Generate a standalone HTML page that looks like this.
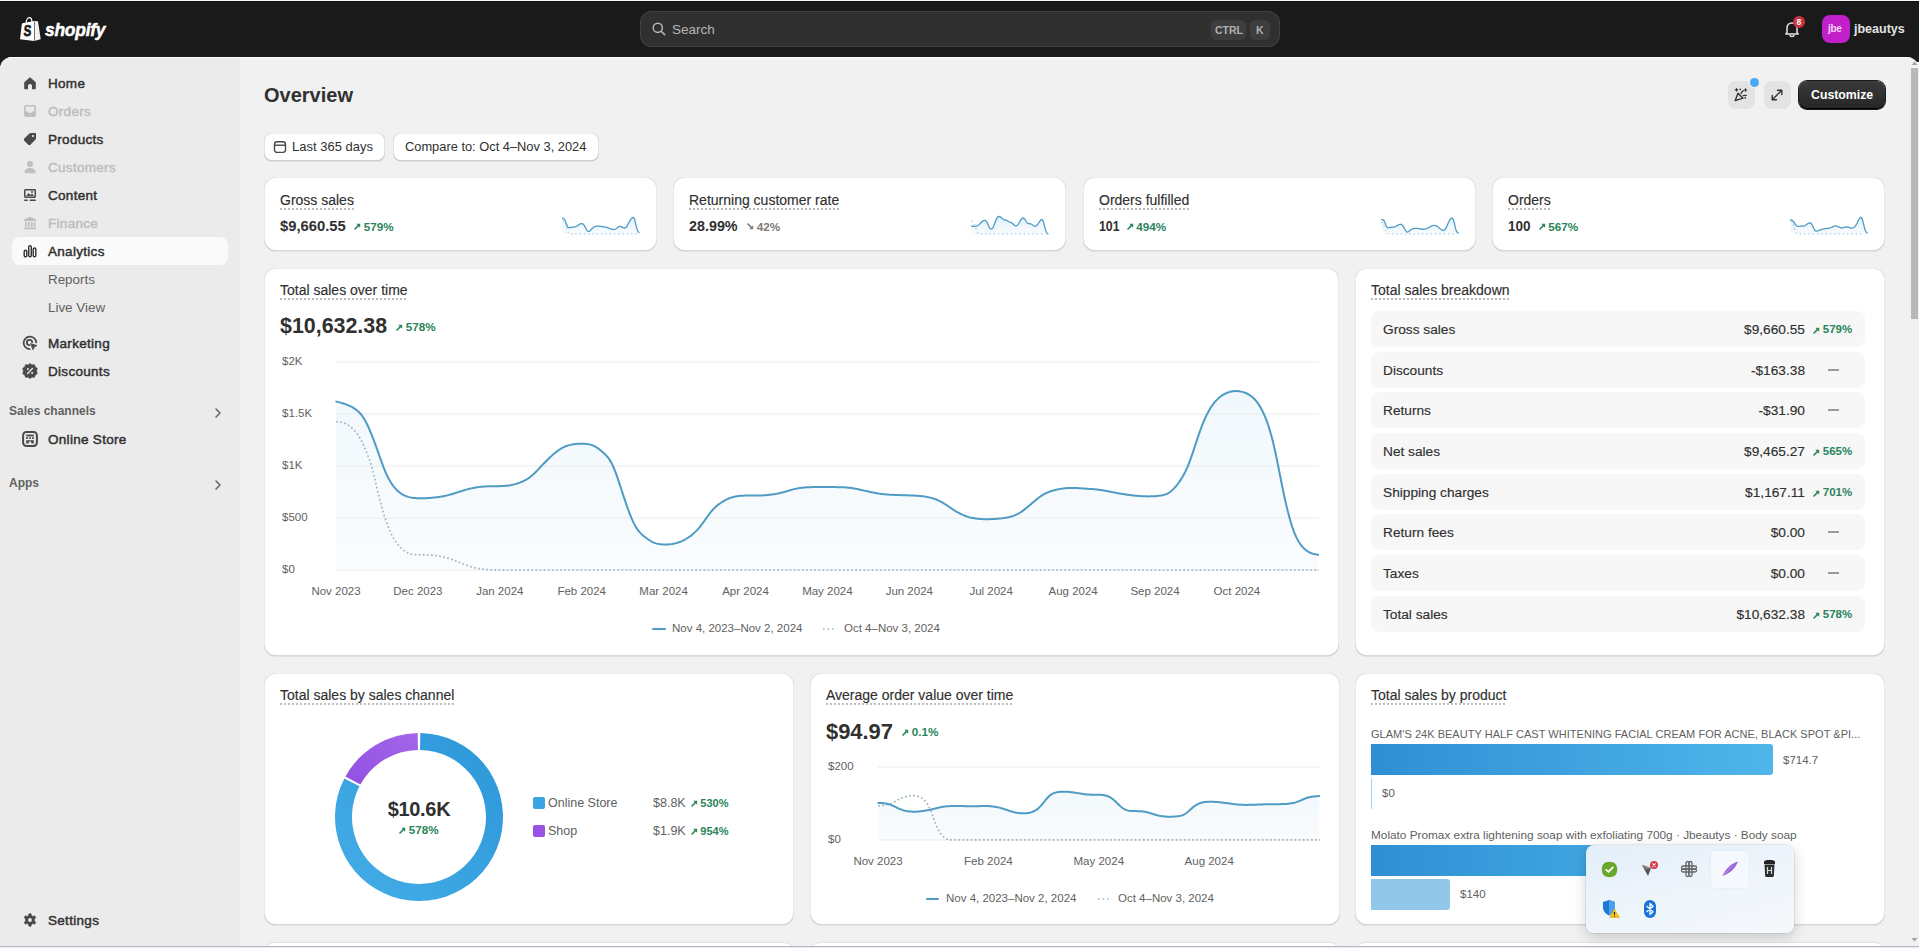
<!DOCTYPE html><html><head><meta charset="utf-8"><style>
*{box-sizing:border-box;margin:0;padding:0}
html,body{width:1919px;height:948px;overflow:hidden;background:#1a1a1a;font-family:"Liberation Sans", sans-serif;color:#303030}
.a{position:absolute}
.t{position:absolute;white-space:nowrap;line-height:1}
.card{position:absolute;background:#fff;border-radius:12px;box-shadow:0 1px 0 0 rgba(26,26,26,.07), inset 1px 0 0 rgba(0,0,0,.09), inset -1px 0 0 rgba(0,0,0,.09), inset 0 -1px 0 rgba(0,0,0,.15), inset 0 1px 0 rgba(0,0,0,.07)}
.ttl{position:absolute;white-space:nowrap;font-size:14px;line-height:16px;color:#303030;background-image:linear-gradient(to right,#bdbdbd 50%,rgba(255,255,255,0) 0%);background-position:0 100%;background-size:4px 2px;background-repeat:repeat-x;padding-bottom:2px;-webkit-text-stroke:0.15px #303030}
.nav{position:absolute;left:48px;font-size:13.5px;font-weight:400;color:#303030;-webkit-text-stroke:0.45px #303030;letter-spacing:0.3px;white-space:nowrap;line-height:1}
.nav.dis{color:#bdbdbd;-webkit-text-stroke:0.45px #bdbdbd}
.sub{position:absolute;left:48px;font-size:13.4px;color:#616161;white-space:nowrap;line-height:1}
.pct{font-size:12px;font-weight:700;color:#29845a}
</style></head><body><div class="a" style="left:0;top:0;width:1919px;height:1px;background:#fbf8f2"></div>
<div class="a" style="left:0;top:1px;width:1919px;height:1px;background:#100d0b"></div>
<svg class="a" style="left:0;top:0" width="120" height="56" viewBox="0 0 120 56">
<path d="M20,39.2 L21.9,23.9 Q22.3,23.2 23.4,23 L34.3,21.1 L34.3,41 Z" fill="#fff"/>
<path d="M34.3,21.1 L37.6,21.3 Q38,21.5 38.1,22 L40.7,39.2 L34.3,41 Z" fill="#f2f2f2"/>
<path d="M34.5,22 V40.8" stroke="#3a3a3a" stroke-width="0.6"/>
<path d="M26.2,23 C26.2,19.6 27.8,17.6 29.4,17.7 C31,17.8 31.9,19.6 31.9,21.9" stroke="#fff" stroke-width="1.2" fill="none"/>
<text x="0" y="0" transform="translate(23.3,36.2) scale(0.74,1) skewX(-6)" font-family="Liberation Sans" font-weight="700" font-size="15.6" fill="#1a1a1a" stroke="#1a1a1a" stroke-width="0.7">S</text>
</svg>
<div class="t" style="left:44.5px;top:19.6px;font-size:19px;font-weight:700;font-style:italic;color:#fff;-webkit-text-stroke:0.5px #fff;letter-spacing:-0.3px;transform:scaleX(0.92);transform-origin:0 0">shopify</div>
<div class="a" style="left:640px;top:11px;width:640px;height:36px;border-radius:12px;background:#303030;box-shadow:inset 0 0 0 1px #414141"></div>
<svg class="a" style="left:652px;top:22px" width="14" height="14" viewBox="0 0 14 14"><circle cx="5.8" cy="5.8" r="4.6" stroke="#b5b5b5" stroke-width="1.5" fill="none"/><path d="M9.2 9.2 L12.6 12.6" stroke="#b5b5b5" stroke-width="1.6" stroke-linecap="round"/></svg>
<div class="t" style="left:672px;top:23px;font-size:13.5px;color:#b5b5b5">Search</div>
<div class="a" style="left:1211px;top:20px;width:35px;height:20px;border-radius:5px;background:#3d3d3d"></div>
<div class="t" style="left:1215px;top:25px;font-size:10.5px;font-weight:700;color:#b0b0b0">CTRL</div>
<div class="a" style="left:1250px;top:20px;width:20px;height:20px;border-radius:5px;background:#3d3d3d"></div>
<div class="t" style="left:1256px;top:25px;font-size:10.5px;font-weight:700;color:#b0b0b0">K</div>
<svg class="a" style="left:1783px;top:20px" width="18" height="18" viewBox="0 0 18 18">
<path d="M4 12.5 V8 C4 5 6.2 3 9 3 C11.8 3 14 5 14 8 V12.5 L15.2 14 H2.8 Z" stroke="#e3e3e3" stroke-width="1.5" fill="none" stroke-linejoin="round"/>
<path d="M7 15.5 C7.3 16.7 10.7 16.7 11 15.5" stroke="#e3e3e3" stroke-width="1.5" fill="none" stroke-linecap="round"/>
</svg>
<div class="a" style="left:1793px;top:16px;width:12px;height:12px;border-radius:6px;background:#c9313d"></div>
<div class="t" style="left:1796.5px;top:18px;font-size:8.5px;font-weight:700;color:#fff">8</div>
<div class="a" style="left:1822px;top:15px;width:28px;height:28px;border-radius:8px;background:#c11fc9"></div>
<div class="t" style="left:1828px;top:24px;font-size:10px;font-weight:700;color:#f4d7f5;letter-spacing:-0.3px">jbe</div>
<div class="t" style="left:1854px;top:23px;font-size:12.5px;font-weight:700;color:#e3e3e3">jbeautys</div>
<div class="a" style="left:0;top:57px;width:1919px;height:891px;background:#f1f1f1;border-radius:12px 12px 0 0;overflow:hidden"><div class="a" style="left:0;top:0;width:240px;height:891px;background:#ebebeb"></div><div class="a" style="left:0;top:0;width:1919px;height:1px;background:rgba(255,255,255,.9)"></div></div>
<div class="a" style="left:1910px;top:62px;width:9px;height:880px;background:#f1f1f1"></div>
<svg class="a" style="left:1910px;top:60px" width="9" height="6" viewBox="0 0 9 6"><path d="M1.5 5 L4.5 1.5 L7.5 5 Z" fill="#a3a3a3"/></svg>
<div class="a" style="left:1911px;top:68px;width:7px;height:251px;background:#b8b8b8"></div>
<svg class="a" style="left:1910px;top:936.5px" width="9" height="6" viewBox="0 0 9 6"><path d="M1.5 1 L4.5 4.5 L7.5 1 Z" fill="#a3a3a3"/></svg>
<svg class="a" style="left:23px;top:76px" width="14" height="14" viewBox="0 0 14 14"><path d="M1.2 6.2 L7 1.2 L12.8 6.2 V12.2 C12.8 12.8 12.4 13.2 11.8 13.2 H9 V9.8 C9 8.7 8.1 7.9 7 7.9 C5.9 7.9 5 8.7 5 9.8 V13.2 H2.2 C1.6 13.2 1.2 12.8 1.2 12.2 Z" fill="#4a4a4a"/></svg>
<div class="nav" style="top:76.5px">Home</div>
<svg class="a" style="left:23px;top:104px" width="14" height="14" viewBox="0 0 14 14"><path d="M3 1 H11 C12.1 1 13 1.9 13 3 V11 C13 12.1 12.1 13 11 13 H3 C1.9 13 1 12.1 1 11 V3 C1 1.9 1.9 1 3 1 Z M2.6 7.6 H5 L6 9 H8 L9 7.6 H11.4 V3.2 C11.4 2.9 11.1 2.6 10.8 2.6 H3.2 C2.9 2.6 2.6 2.9 2.6 3.2 Z" fill="#bfbfbf" fill-rule="evenodd"/></svg>
<div class="nav dis" style="top:104.5px">Orders</div>
<svg class="a" style="left:23px;top:132px" width="14" height="14" viewBox="0 0 14 14"><path d="M7.6 1 H12 C12.6 1 13 1.4 13 2 V6.4 C13 6.9 12.8 7.3 12.5 7.6 L7.4 12.7 C6.8 13.3 5.9 13.3 5.3 12.7 L1.3 8.7 C0.7 8.1 0.7 7.2 1.3 6.6 L6.4 1.5 C6.7 1.2 7.1 1 7.6 1 Z" fill="#4a4a4a"/><circle cx="10" cy="4" r="1.1" fill="#ebebeb"/></svg>
<div class="nav" style="top:132.5px">Products</div>
<svg class="a" style="left:23px;top:160px" width="14" height="14" viewBox="0 0 14 14"><circle cx="7" cy="4" r="3" fill="#bfbfbf"/><path d="M1.5 12.5 C1.5 9.5 4 8 7 8 C10 8 12.5 9.5 12.5 12.5 C12.5 13 12.1 13.3 11.6 13.3 H2.4 C1.9 13.3 1.5 13 1.5 12.5 Z" fill="#bfbfbf"/></svg>
<div class="nav dis" style="top:160.5px">Customers</div>
<svg class="a" style="left:23px;top:188px" width="14" height="14" viewBox="0 0 14 14"><path d="M2.5 1 H11.5 C12.3 1 13 1.7 13 2.5 V8.5 C13 9.3 12.3 10 11.5 10 H2.5 C1.7 10 1 9.3 1 8.5 V2.5 C1 1.7 1.7 1 2.5 1 Z M2.5 2.5 V8.5 H11.5 V2.5 Z" fill="#4a4a4a" fill-rule="evenodd"/><path d="M3 8 L5.5 5 L7.5 7 L9 5.5 L11 8 Z" fill="#4a4a4a"/><circle cx="9" cy="4" r="1" fill="#4a4a4a"/><rect x="1" y="11.5" width="4" height="1.6" rx="0.8" fill="#4a4a4a"/><rect x="6.5" y="11.5" width="6.5" height="1.6" rx="0.8" fill="#4a4a4a"/></svg>
<div class="nav" style="top:188.5px">Content</div>
<svg class="a" style="left:23px;top:216px" width="14" height="14" viewBox="0 0 14 14"><path d="M7 0.8 L13 3.6 V5 H1 V3.6 Z" fill="#bfbfbf"/><rect x="2" y="5.8" width="1.8" height="5" fill="#bfbfbf"/><rect x="5" y="5.8" width="1.8" height="5" fill="#bfbfbf"/><rect x="8" y="5.8" width="1.8" height="5" fill="#bfbfbf"/><rect x="11" y="5.8" width="1.4" height="5" fill="#bfbfbf"/><rect x="1" y="11.4" width="12" height="1.8" rx="0.5" fill="#bfbfbf"/></svg>
<div class="nav dis" style="top:216.5px">Finance</div>
<div class="a" style="left:12px;top:237px;width:216px;height:28px;border-radius:8px;background:#fafafa"></div>
<svg class="a" style="left:23px;top:244px" width="14" height="14" viewBox="0 0 14 14"><rect x="1.2" y="6.2" width="2.6" height="6.6" rx="1.3" stroke="#303030" stroke-width="1.4" fill="none"/><rect x="5.7" y="1.6" width="2.6" height="11.2" rx="1.3" stroke="#303030" stroke-width="1.4" fill="none"/><rect x="10.2" y="4" width="2.6" height="8.8" rx="1.3" stroke="#303030" stroke-width="1.4" fill="none"/></svg>
<div class="nav" style="top:244.5px">Analytics</div>
<div class="sub" style="top:273px">Reports</div>
<div class="sub" style="top:301px">Live View</div>
<svg class="a" style="left:22px;top:335px" width="16" height="16" viewBox="0 0 16 16"><path d="M14.2 7.4 A6.3 6.3 0 1 0 7.6 14.2" stroke="#4a4a4a" stroke-width="1.8" fill="none" stroke-linecap="round"/><path d="M10.2 7.2 A2.7 2.7 0 1 0 7.4 10.2" stroke="#4a4a4a" stroke-width="1.8" fill="none" stroke-linecap="round"/><path d="M8.6 8.6 L15 10.6 L12.2 12 L11 14.8 Z" fill="#4a4a4a" stroke="#4a4a4a" stroke-width="0.8" stroke-linejoin="round"/></svg>
<div class="nav" style="top:336.5px">Marketing</div>
<svg class="a" style="left:22px;top:363px" width="16" height="16" viewBox="0 0 16 16"><path d="M8 0.4 L10 1.9 L12.4 1.6 L13.3 3.9 L15.3 5.3 L14.6 8 L15.3 10.7 L13.3 12.1 L12.4 14.4 L10 14.1 L8 15.6 L6 14.1 L3.6 14.4 L2.7 12.1 L0.7 10.7 L1.4 8 L0.7 5.3 L2.7 3.9 L3.6 1.6 L6 1.9 Z" fill="#4a4a4a" stroke="#4a4a4a" stroke-width="0.6" stroke-linejoin="round"/><path d="M5.6 10.4 L10.4 5.6" stroke="#ebebeb" stroke-width="1.4" stroke-linecap="round"/><circle cx="5.9" cy="5.9" r="1" fill="#ebebeb"/><circle cx="10.1" cy="10.1" r="1" fill="#ebebeb"/></svg>
<div class="nav" style="top:364.5px">Discounts</div>
<div class="t" style="left:9px;top:404.5px;font-size:12px;font-weight:700;color:#616161">Sales channels</div>
<svg class="a" style="left:214px;top:407px" width="8" height="12" viewBox="0 0 8 12"><path d="M2 2 L6 6 L2 10" stroke="#616161" stroke-width="1.5" fill="none" stroke-linecap="round" stroke-linejoin="round"/></svg>
<svg class="a" style="left:22px;top:431px" width="16" height="16" viewBox="0 0 16 16"><rect x="1.1" y="1.1" width="13.8" height="13.8" rx="3.3" stroke="#4a4a4a" stroke-width="2" fill="none"/><rect x="4.2" y="3.6" width="7.6" height="1.8" fill="#4a4a4a"/><circle cx="5" cy="7" r="1.05" fill="#4a4a4a"/><circle cx="8" cy="7" r="1.05" fill="#4a4a4a"/><circle cx="11" cy="7" r="1.05" fill="#4a4a4a"/><path d="M4.2 9.2 H11.8 V12.4 H9.2 V10.6 H6.8 V12.4 H4.2 Z" fill="#4a4a4a"/></svg>
<div class="nav" style="top:432.5px">Online Store</div>
<div class="t" style="left:9px;top:476.5px;font-size:12px;font-weight:700;color:#616161">Apps</div>
<svg class="a" style="left:214px;top:479px" width="8" height="12" viewBox="0 0 8 12"><path d="M2 2 L6 6 L2 10" stroke="#616161" stroke-width="1.5" fill="none" stroke-linecap="round" stroke-linejoin="round"/></svg>
<svg class="a" style="left:23px;top:913px" width="14" height="14" viewBox="0 0 14 14"><path d="M5.9 0.8 H8.1 L8.5 2.6 L9.9 3.4 L11.7 2.8 L12.8 4.7 L11.4 6 V8 L12.8 9.3 L11.7 11.2 L9.9 10.6 L8.5 11.4 L8.1 13.2 H5.9 L5.5 11.4 L4.1 10.6 L2.3 11.2 L1.2 9.3 L2.6 8 V6 L1.2 4.7 L2.3 2.8 L4.1 3.4 L5.5 2.6 Z" fill="#4a4a4a" stroke="#4a4a4a" stroke-width="0.6" stroke-linejoin="round"/><circle cx="7" cy="7" r="1.9" fill="#ebebeb"/></svg>
<div class="nav" style="top:913.5px">Settings</div>
<div class="t" style="left:264px;top:85px;font-size:20px;font-weight:700;color:#303030">Overview</div>
<div class="a" style="left:1728px;top:81px;width:27px;height:28px;border-radius:8px;background:#e3e3e3"></div>
<svg class="a" style="left:1733px;top:87px" width="17" height="16" viewBox="0 0 17 16">
<path d="M2.2 13.6 L5 6.2 L10 11.2 Z" stroke="#303030" stroke-width="1.4" fill="none" stroke-linejoin="round"/>
<path d="M8 6.5 C8.5 5 9.5 4.5 10.3 3.6" stroke="#303030" stroke-width="1.3" fill="none" stroke-linecap="round"/>
<path d="M10.2 8.7 L13.2 8.3" stroke="#303030" stroke-width="1.3" stroke-linecap="round"/>
<path d="M3.5 1.5 L3.5 4 M2.2 2.8 L4.8 2.8" stroke="#303030" stroke-width="1.2" stroke-linecap="round"/>
<path d="M12.5 1.8 L12.5 4.2 M11.3 3 L13.7 3" stroke="#303030" stroke-width="1.2" stroke-linecap="round"/>
<circle cx="7.2" cy="2.4" r="0.8" fill="#303030"/><circle cx="12.2" cy="10.8" r="0.9" fill="#303030"/>
</svg>
<div class="a" style="left:1750px;top:78px;width:9px;height:9px;border-radius:5px;background:#4aa8f0;box-shadow:0 0 0 1.5px #f1f1f1"></div>
<div class="a" style="left:1764px;top:81px;width:27px;height:28px;border-radius:8px;background:#e3e3e3"></div>
<svg class="a" style="left:1769px;top:87px" width="16" height="16" viewBox="0 0 16 16">
<path d="M3.5 12.5 L12.5 3.5" stroke="#303030" stroke-width="1.4" stroke-linecap="round"/>
<path d="M8.5 3.2 H12.8 V7.5" stroke="#303030" stroke-width="1.4" fill="none" stroke-linecap="round" stroke-linejoin="round"/>
<path d="M3.2 8.5 V12.8 H7.5" stroke="#303030" stroke-width="1.4" fill="none" stroke-linecap="round" stroke-linejoin="round"/>
</svg>
<div class="a" style="left:1799px;top:81px;width:86px;height:28px;border-radius:8px;background:linear-gradient(#3a3a3a,#262626);box-shadow:inset 0 -1px 0 #000, 0 0 0 1px #1a1a1a"></div>
<div class="t" style="left:1811px;top:88.5px;font-size:12.3px;font-weight:700;color:#fff">Customize</div>
<div class="a" style="left:264px;top:133px;width:121px;height:28px;border-radius:8px;background:#fff;box-shadow:0 1px 0 0 rgba(26,26,26,.07), inset 1px 0 0 rgba(0,0,0,.1), inset -1px 0 0 rgba(0,0,0,.1), inset 0 -1px 0 rgba(0,0,0,.18), inset 0 1px 0 rgba(0,0,0,.06)"></div>
<svg class="a" style="left:273px;top:140px" width="14" height="14" viewBox="0 0 14 14"><rect x="1.5" y="1.8" width="11" height="10.6" rx="2.6" stroke="#4a4a4a" stroke-width="1.4" fill="none"/><path d="M1.8 5.2 H12.2" stroke="#4a4a4a" stroke-width="1.4"/></svg>
<div class="t" style="left:292px;top:139.5px;font-size:13px;color:#303030">Last 365 days</div>
<div class="a" style="left:393px;top:133px;width:206px;height:28px;border-radius:8px;background:#fff;box-shadow:0 1px 0 0 rgba(26,26,26,.07), inset 1px 0 0 rgba(0,0,0,.1), inset -1px 0 0 rgba(0,0,0,.1), inset 0 -1px 0 rgba(0,0,0,.18), inset 0 1px 0 rgba(0,0,0,.06)"></div>
<div class="t" style="left:405px;top:140.5px;font-size:12.85px;color:#303030">Compare to: Oct 4–Nov 3, 2024</div>
<div class="card" style="left:264px;top:177px;width:393px;height:74px"></div>
<div class="ttl" style="left:280px;top:192px">Gross sales</div>
<div class="t" style="left:280px;top:218px;font-size:15px;font-weight:700;color:#303030;transform:scaleX(0.985);transform-origin:0 0">$9,660.55</div>
<svg class="a" style="left:354px;top:223.0px" width="7" height="7" viewBox="0 0 7 7"><path d="M1 6 L4.6 2.4" stroke="#29845a" stroke-width="1.6" stroke-linecap="round"/><path d="M2.3 0.8 H6.2 V4.7 Z" fill="#29845a"/></svg><div class="t" style="left:363.8px;top:220.81px;font-size:11.7px;font-weight:700;color:#29845a">579%</div>
<div class="card" style="left:673px;top:177px;width:393px;height:74px"></div>
<div class="ttl" style="left:689px;top:192px">Returning customer rate</div>
<div class="t" style="left:689px;top:218px;font-size:15px;font-weight:700;color:#303030;transform:scaleX(0.955);transform-origin:0 0">28.99%</div>
<svg class="a" style="left:747px;top:223.0px" width="7" height="7" viewBox="0 0 7 7"><path d="M1 1 L4.6 4.6" stroke="#7a7a7a" stroke-width="1.6" stroke-linecap="round"/><path d="M2.3 6.2 H6.2 V2.3 Z" fill="#7a7a7a"/></svg><div class="t" style="left:756.8px;top:220.81px;font-size:11.7px;font-weight:700;color:#7a7a7a">42%</div>
<div class="card" style="left:1083px;top:177px;width:393px;height:74px"></div>
<div class="ttl" style="left:1099px;top:192px">Orders fulfilled</div>
<div class="t" style="left:1099px;top:218px;font-size:15px;font-weight:700;color:#303030;transform:scaleX(0.82);transform-origin:0 0">101</div>
<svg class="a" style="left:1126.5px;top:223.0px" width="7" height="7" viewBox="0 0 7 7"><path d="M1 6 L4.6 2.4" stroke="#29845a" stroke-width="1.6" stroke-linecap="round"/><path d="M2.3 0.8 H6.2 V4.7 Z" fill="#29845a"/></svg><div class="t" style="left:1136.3px;top:220.81px;font-size:11.7px;font-weight:700;color:#29845a">494%</div>
<div class="card" style="left:1492px;top:177px;width:393px;height:74px"></div>
<div class="ttl" style="left:1508px;top:192px">Orders</div>
<div class="t" style="left:1508px;top:218px;font-size:15px;font-weight:700;color:#303030;transform:scaleX(0.9);transform-origin:0 0">100</div>
<svg class="a" style="left:1538.5px;top:223.0px" width="7" height="7" viewBox="0 0 7 7"><path d="M1 6 L4.6 2.4" stroke="#29845a" stroke-width="1.6" stroke-linecap="round"/><path d="M2.3 0.8 H6.2 V4.7 Z" fill="#29845a"/></svg><div class="t" style="left:1548.3px;top:220.81px;font-size:11.7px;font-weight:700;color:#29845a">567%</div>
<svg class="a" style="left:0;top:0" width="1919" height="948" viewBox="0 0 1919 948" overflow="visible"><defs><linearGradient id="g1" x1="0" y1="0" x2="0" y2="1"><stop offset="0" stop-color="#d8ecf8" stop-opacity="0.9"/><stop offset="1" stop-color="#eef6fb" stop-opacity="0.4"/></linearGradient></defs><path d="M562.50,218.20 L563.00,218.30 L563.50,218.49 L564.00,218.84 L564.50,219.42 L565.00,220.30 L565.50,221.44 L566.00,222.76 L566.50,224.12 L567.00,225.40 L567.50,226.44 L568.00,227.17 L568.50,227.58 L569.00,227.72 L569.50,227.70 L570.00,227.60 L570.50,227.50 L571.00,227.41 L571.50,227.33 L572.00,227.27 L572.50,227.22 L573.00,227.16 L573.50,227.09 L574.00,227.02 L574.50,226.92 L575.00,226.80 L575.50,226.65 L576.00,226.46 L576.50,226.24 L577.00,225.96 L577.50,225.66 L578.00,225.33 L578.50,224.99 L579.00,224.66 L579.50,224.35 L580.00,224.07 L580.50,223.85 L581.00,223.69 L581.50,223.61 L582.00,223.63 L582.50,223.76 L583.00,224.03 L583.50,224.46 L584.00,225.06 L584.50,225.82 L585.00,226.72 L585.50,227.68 L586.00,228.65 L586.50,229.56 L587.00,230.35 L587.50,230.96 L588.00,231.33 L588.50,231.47 L589.00,231.38 L589.50,231.13 L590.00,230.75 L590.50,230.29 L591.00,229.79 L591.50,229.28 L592.00,228.77 L592.50,228.28 L593.00,227.83 L593.50,227.42 L594.00,227.07 L594.50,226.78 L595.00,226.55 L595.50,226.37 L596.00,226.23 L596.50,226.13 L597.00,226.08 L597.50,226.05 L598.00,226.05 L598.50,226.08 L599.00,226.12 L599.50,226.18 L600.00,226.25 L600.50,226.32 L601.00,226.40 L601.50,226.47 L602.00,226.54 L602.50,226.62 L603.00,226.69 L603.50,226.76 L604.00,226.84 L604.50,226.92 L605.00,227.02 L605.50,227.12 L606.00,227.23 L606.50,227.35 L607.00,227.49 L607.50,227.64 L608.00,227.81 L608.50,227.99 L609.00,228.19 L609.50,228.39 L610.00,228.59 L610.50,228.79 L611.00,228.97 L611.50,229.14 L612.00,229.28 L612.50,229.39 L613.00,229.47 L613.50,229.50 L614.00,229.48 L614.50,229.41 L615.00,229.27 L615.50,229.06 L616.00,228.77 L616.50,228.41 L617.00,228.01 L617.50,227.58 L618.00,227.17 L618.50,226.82 L619.00,226.55 L619.50,226.40 L620.00,226.37 L620.50,226.45 L621.00,226.61 L621.50,226.84 L622.00,227.10 L622.50,227.36 L623.00,227.61 L623.50,227.82 L624.00,227.96 L624.50,228.01 L625.00,227.94 L625.50,227.73 L626.00,227.35 L626.50,226.79 L627.00,226.06 L627.50,225.20 L628.00,224.26 L628.50,223.30 L629.00,222.36 L629.50,221.47 L630.00,220.64 L630.50,219.87 L631.00,219.19 L631.50,218.58 L632.00,218.07 L632.50,217.68 L633.00,217.45 L633.50,217.52 L634.00,218.00 L634.50,219.04 L635.00,220.68 L635.50,222.79 L636.00,225.09 L636.50,227.24 L637.00,229.00 L637.50,230.31 L638.00,231.25 L638.50,231.94 L639.00,232.50 L639.0,234 L562.5,234 Z" fill="url(#g1)"/><path d="M562.50,220.50 C563.33,220.75 564.17,221.00 565.00,222.00 C565.83,223.00 566.67,229.07 567.50,231.00 C568.33,232.93 569.17,233.90 570.00,233.90 C592.33,233.90 614.67,233.90 637.00,233.90" stroke="#a9c6d6" stroke-width="1.3" fill="none" stroke-dasharray="1.3 3"/><path d="M562.50,218.20 L563.00,218.30 L563.50,218.49 L564.00,218.84 L564.50,219.42 L565.00,220.30 L565.50,221.44 L566.00,222.76 L566.50,224.12 L567.00,225.40 L567.50,226.44 L568.00,227.17 L568.50,227.58 L569.00,227.72 L569.50,227.70 L570.00,227.60 L570.50,227.50 L571.00,227.41 L571.50,227.33 L572.00,227.27 L572.50,227.22 L573.00,227.16 L573.50,227.09 L574.00,227.02 L574.50,226.92 L575.00,226.80 L575.50,226.65 L576.00,226.46 L576.50,226.24 L577.00,225.96 L577.50,225.66 L578.00,225.33 L578.50,224.99 L579.00,224.66 L579.50,224.35 L580.00,224.07 L580.50,223.85 L581.00,223.69 L581.50,223.61 L582.00,223.63 L582.50,223.76 L583.00,224.03 L583.50,224.46 L584.00,225.06 L584.50,225.82 L585.00,226.72 L585.50,227.68 L586.00,228.65 L586.50,229.56 L587.00,230.35 L587.50,230.96 L588.00,231.33 L588.50,231.47 L589.00,231.38 L589.50,231.13 L590.00,230.75 L590.50,230.29 L591.00,229.79 L591.50,229.28 L592.00,228.77 L592.50,228.28 L593.00,227.83 L593.50,227.42 L594.00,227.07 L594.50,226.78 L595.00,226.55 L595.50,226.37 L596.00,226.23 L596.50,226.13 L597.00,226.08 L597.50,226.05 L598.00,226.05 L598.50,226.08 L599.00,226.12 L599.50,226.18 L600.00,226.25 L600.50,226.32 L601.00,226.40 L601.50,226.47 L602.00,226.54 L602.50,226.62 L603.00,226.69 L603.50,226.76 L604.00,226.84 L604.50,226.92 L605.00,227.02 L605.50,227.12 L606.00,227.23 L606.50,227.35 L607.00,227.49 L607.50,227.64 L608.00,227.81 L608.50,227.99 L609.00,228.19 L609.50,228.39 L610.00,228.59 L610.50,228.79 L611.00,228.97 L611.50,229.14 L612.00,229.28 L612.50,229.39 L613.00,229.47 L613.50,229.50 L614.00,229.48 L614.50,229.41 L615.00,229.27 L615.50,229.06 L616.00,228.77 L616.50,228.41 L617.00,228.01 L617.50,227.58 L618.00,227.17 L618.50,226.82 L619.00,226.55 L619.50,226.40 L620.00,226.37 L620.50,226.45 L621.00,226.61 L621.50,226.84 L622.00,227.10 L622.50,227.36 L623.00,227.61 L623.50,227.82 L624.00,227.96 L624.50,228.01 L625.00,227.94 L625.50,227.73 L626.00,227.35 L626.50,226.79 L627.00,226.06 L627.50,225.20 L628.00,224.26 L628.50,223.30 L629.00,222.36 L629.50,221.47 L630.00,220.64 L630.50,219.87 L631.00,219.19 L631.50,218.58 L632.00,218.07 L632.50,217.68 L633.00,217.45 L633.50,217.52 L634.00,218.00 L634.50,219.04 L635.00,220.68 L635.50,222.79 L636.00,225.09 L636.50,227.24 L637.00,229.00 L637.50,230.31 L638.00,231.25 L638.50,231.94 L639.00,232.50" stroke="#4f9bc4" stroke-width="1.3" fill="none" stroke-linejoin="round" stroke-linecap="round"/></svg>
<svg class="a" style="left:0;top:0" width="1919" height="948" viewBox="0 0 1919 948" overflow="visible"><defs><linearGradient id="g2" x1="0" y1="0" x2="0" y2="1"><stop offset="0" stop-color="#d8ecf8" stop-opacity="0.9"/><stop offset="1" stop-color="#eef6fb" stop-opacity="0.4"/></linearGradient></defs><path d="M971.60,226.20 L972.10,226.24 L972.60,226.27 L973.10,226.30 L973.60,226.31 L974.10,226.31 L974.60,226.28 L975.10,226.23 L975.60,226.16 L976.10,226.05 L976.60,225.90 L977.10,225.72 L977.60,225.48 L978.10,225.20 L978.60,224.87 L979.10,224.48 L979.60,224.04 L980.10,223.56 L980.60,223.05 L981.10,222.53 L981.60,222.03 L982.10,221.56 L982.60,221.14 L983.10,220.79 L983.60,220.52 L984.10,220.36 L984.60,220.32 L985.10,220.42 L985.60,220.69 L986.10,221.13 L986.60,221.77 L987.10,222.59 L987.60,223.56 L988.10,224.62 L988.60,225.70 L989.10,226.74 L989.60,227.67 L990.10,228.43 L990.60,228.96 L991.10,229.21 L991.60,229.15 L992.10,228.81 L992.60,228.19 L993.10,227.33 L993.60,226.25 L994.10,225.01 L994.60,223.67 L995.10,222.30 L995.60,220.96 L996.10,219.71 L996.60,218.63 L997.10,217.76 L997.60,217.13 L998.10,216.73 L998.60,216.52 L999.10,216.49 L999.60,216.61 L1000.10,216.84 L1000.60,217.16 L1001.10,217.54 L1001.60,217.96 L1002.10,218.38 L1002.60,218.79 L1003.10,219.14 L1003.60,219.42 L1004.10,219.63 L1004.60,219.78 L1005.10,219.91 L1005.60,220.05 L1006.10,220.23 L1006.60,220.44 L1007.10,220.70 L1007.60,220.97 L1008.10,221.25 L1008.60,221.52 L1009.10,221.77 L1009.60,221.99 L1010.10,222.17 L1010.60,222.35 L1011.10,222.57 L1011.60,222.85 L1012.10,223.22 L1012.60,223.64 L1013.10,224.10 L1013.60,224.56 L1014.10,225.00 L1014.60,225.37 L1015.10,225.66 L1015.60,225.82 L1016.10,225.84 L1016.60,225.70 L1017.10,225.39 L1017.60,224.93 L1018.10,224.33 L1018.60,223.61 L1019.10,222.82 L1019.60,221.98 L1020.10,221.13 L1020.60,220.31 L1021.10,219.56 L1021.60,218.92 L1022.10,218.42 L1022.60,218.11 L1023.10,218.01 L1023.60,218.12 L1024.10,218.44 L1024.60,218.96 L1025.10,219.64 L1025.60,220.43 L1026.10,221.26 L1026.60,222.04 L1027.10,222.71 L1027.60,223.20 L1028.10,223.51 L1028.60,223.66 L1029.10,223.71 L1029.60,223.71 L1030.10,223.73 L1030.60,223.81 L1031.10,224.00 L1031.60,224.28 L1032.10,224.64 L1032.60,225.03 L1033.10,225.42 L1033.60,225.77 L1034.10,226.04 L1034.60,226.21 L1035.10,226.25 L1035.60,226.15 L1036.10,225.92 L1036.60,225.56 L1037.10,225.07 L1037.60,224.47 L1038.10,223.77 L1038.60,223.01 L1039.10,222.24 L1039.60,221.50 L1040.10,220.81 L1040.60,220.23 L1041.10,219.79 L1041.60,219.56 L1042.10,219.62 L1042.60,220.06 L1043.10,220.98 L1043.60,222.39 L1044.10,224.23 L1044.60,226.28 L1045.10,228.33 L1045.60,230.12 L1046.10,231.53 L1046.60,232.52 L1047.10,233.18 L1047.60,233.60 L1048.00,233.90 L1048.0,234 L971.6,234 Z" fill="url(#g2)"/><path d="M971.60,220.80 C972.73,222.35 973.87,223.90 975.00,226.00 C976.20,228.22 977.40,233.90 978.60,233.90 C1000.73,233.90 1022.87,233.90 1045.00,233.90" stroke="#a9c6d6" stroke-width="1.3" fill="none" stroke-dasharray="1.3 3"/><path d="M971.60,226.20 L972.10,226.24 L972.60,226.27 L973.10,226.30 L973.60,226.31 L974.10,226.31 L974.60,226.28 L975.10,226.23 L975.60,226.16 L976.10,226.05 L976.60,225.90 L977.10,225.72 L977.60,225.48 L978.10,225.20 L978.60,224.87 L979.10,224.48 L979.60,224.04 L980.10,223.56 L980.60,223.05 L981.10,222.53 L981.60,222.03 L982.10,221.56 L982.60,221.14 L983.10,220.79 L983.60,220.52 L984.10,220.36 L984.60,220.32 L985.10,220.42 L985.60,220.69 L986.10,221.13 L986.60,221.77 L987.10,222.59 L987.60,223.56 L988.10,224.62 L988.60,225.70 L989.10,226.74 L989.60,227.67 L990.10,228.43 L990.60,228.96 L991.10,229.21 L991.60,229.15 L992.10,228.81 L992.60,228.19 L993.10,227.33 L993.60,226.25 L994.10,225.01 L994.60,223.67 L995.10,222.30 L995.60,220.96 L996.10,219.71 L996.60,218.63 L997.10,217.76 L997.60,217.13 L998.10,216.73 L998.60,216.52 L999.10,216.49 L999.60,216.61 L1000.10,216.84 L1000.60,217.16 L1001.10,217.54 L1001.60,217.96 L1002.10,218.38 L1002.60,218.79 L1003.10,219.14 L1003.60,219.42 L1004.10,219.63 L1004.60,219.78 L1005.10,219.91 L1005.60,220.05 L1006.10,220.23 L1006.60,220.44 L1007.10,220.70 L1007.60,220.97 L1008.10,221.25 L1008.60,221.52 L1009.10,221.77 L1009.60,221.99 L1010.10,222.17 L1010.60,222.35 L1011.10,222.57 L1011.60,222.85 L1012.10,223.22 L1012.60,223.64 L1013.10,224.10 L1013.60,224.56 L1014.10,225.00 L1014.60,225.37 L1015.10,225.66 L1015.60,225.82 L1016.10,225.84 L1016.60,225.70 L1017.10,225.39 L1017.60,224.93 L1018.10,224.33 L1018.60,223.61 L1019.10,222.82 L1019.60,221.98 L1020.10,221.13 L1020.60,220.31 L1021.10,219.56 L1021.60,218.92 L1022.10,218.42 L1022.60,218.11 L1023.10,218.01 L1023.60,218.12 L1024.10,218.44 L1024.60,218.96 L1025.10,219.64 L1025.60,220.43 L1026.10,221.26 L1026.60,222.04 L1027.10,222.71 L1027.60,223.20 L1028.10,223.51 L1028.60,223.66 L1029.10,223.71 L1029.60,223.71 L1030.10,223.73 L1030.60,223.81 L1031.10,224.00 L1031.60,224.28 L1032.10,224.64 L1032.60,225.03 L1033.10,225.42 L1033.60,225.77 L1034.10,226.04 L1034.60,226.21 L1035.10,226.25 L1035.60,226.15 L1036.10,225.92 L1036.60,225.56 L1037.10,225.07 L1037.60,224.47 L1038.10,223.77 L1038.60,223.01 L1039.10,222.24 L1039.60,221.50 L1040.10,220.81 L1040.60,220.23 L1041.10,219.79 L1041.60,219.56 L1042.10,219.62 L1042.60,220.06 L1043.10,220.98 L1043.60,222.39 L1044.10,224.23 L1044.60,226.28 L1045.10,228.33 L1045.60,230.12 L1046.10,231.53 L1046.60,232.52 L1047.10,233.18 L1047.60,233.60 L1048.00,233.90" stroke="#4f9bc4" stroke-width="1.3" fill="none" stroke-linejoin="round" stroke-linecap="round"/></svg>
<svg class="a" style="left:0;top:0" width="1919" height="948" viewBox="0 0 1919 948" overflow="visible"><defs><linearGradient id="g3" x1="0" y1="0" x2="0" y2="1"><stop offset="0" stop-color="#d8ecf8" stop-opacity="0.9"/><stop offset="1" stop-color="#eef6fb" stop-opacity="0.4"/></linearGradient></defs><path d="M1381.60,219.60 L1382.10,219.59 L1382.60,219.65 L1383.10,219.84 L1383.60,220.23 L1384.10,220.88 L1384.60,221.82 L1385.10,223.01 L1385.60,224.32 L1386.10,225.57 L1386.60,226.60 L1387.10,227.30 L1387.60,227.67 L1388.10,227.78 L1388.60,227.73 L1389.10,227.61 L1389.60,227.49 L1390.10,227.40 L1390.60,227.34 L1391.10,227.30 L1391.60,227.27 L1392.10,227.24 L1392.60,227.21 L1393.10,227.17 L1393.60,227.11 L1394.10,227.02 L1394.60,226.89 L1395.10,226.72 L1395.60,226.51 L1396.10,226.26 L1396.60,225.98 L1397.10,225.68 L1397.60,225.39 L1398.10,225.10 L1398.60,224.84 L1399.10,224.62 L1399.60,224.45 L1400.10,224.35 L1400.60,224.32 L1401.10,224.40 L1401.60,224.60 L1402.10,224.93 L1402.60,225.44 L1403.10,226.11 L1403.60,226.92 L1404.10,227.83 L1404.60,228.77 L1405.10,229.68 L1405.60,230.52 L1406.10,231.22 L1406.60,231.72 L1407.10,231.99 L1407.60,232.02 L1408.10,231.85 L1408.60,231.53 L1409.10,231.13 L1409.60,230.70 L1410.10,230.28 L1410.60,229.90 L1411.10,229.56 L1411.60,229.27 L1412.10,229.01 L1412.60,228.80 L1413.10,228.62 L1413.60,228.49 L1414.10,228.39 L1414.60,228.32 L1415.10,228.29 L1415.60,228.29 L1416.10,228.30 L1416.60,228.34 L1417.10,228.40 L1417.60,228.47 L1418.10,228.55 L1418.60,228.64 L1419.10,228.74 L1419.60,228.83 L1420.10,228.93 L1420.60,229.02 L1421.10,229.09 L1421.60,229.16 L1422.10,229.21 L1422.60,229.25 L1423.10,229.26 L1423.60,229.25 L1424.10,229.22 L1424.60,229.17 L1425.10,229.09 L1425.60,228.98 L1426.10,228.84 L1426.60,228.67 L1427.10,228.47 L1427.60,228.24 L1428.10,227.98 L1428.60,227.69 L1429.10,227.39 L1429.60,227.08 L1430.10,226.77 L1430.60,226.48 L1431.10,226.20 L1431.60,225.96 L1432.10,225.75 L1432.60,225.59 L1433.10,225.48 L1433.60,225.41 L1434.10,225.40 L1434.60,225.43 L1435.10,225.51 L1435.60,225.63 L1436.10,225.81 L1436.60,226.03 L1437.10,226.29 L1437.60,226.60 L1438.10,226.96 L1438.60,227.36 L1439.10,227.79 L1439.60,228.23 L1440.10,228.68 L1440.60,229.11 L1441.10,229.51 L1441.60,229.85 L1442.10,230.13 L1442.60,230.32 L1443.10,230.42 L1443.60,230.39 L1444.10,230.23 L1444.60,229.91 L1445.10,229.43 L1445.60,228.76 L1446.10,227.90 L1446.60,226.88 L1447.10,225.74 L1447.60,224.55 L1448.10,223.36 L1448.60,222.22 L1449.10,221.17 L1449.60,220.23 L1450.10,219.43 L1450.60,218.78 L1451.10,218.31 L1451.60,218.04 L1452.10,218.03 L1452.60,218.34 L1453.10,219.09 L1453.60,220.34 L1454.10,222.12 L1454.60,224.29 L1455.10,226.57 L1455.60,228.65 L1456.10,230.30 L1456.60,231.47 L1457.10,232.21 L1457.60,232.65 L1458.10,232.88 L1458.50,233.00 L1458.5,234 L1381.6,234 Z" fill="url(#g3)"/><path d="M1381.60,222.00 C1382.40,223.27 1383.20,224.53 1384.00,226.00 C1384.77,227.41 1385.53,229.34 1386.30,230.60 C1387.20,232.08 1388.10,233.90 1389.00,233.90 C1411.00,233.90 1433.00,233.90 1455.00,233.90" stroke="#a9c6d6" stroke-width="1.3" fill="none" stroke-dasharray="1.3 3"/><path d="M1381.60,219.60 L1382.10,219.59 L1382.60,219.65 L1383.10,219.84 L1383.60,220.23 L1384.10,220.88 L1384.60,221.82 L1385.10,223.01 L1385.60,224.32 L1386.10,225.57 L1386.60,226.60 L1387.10,227.30 L1387.60,227.67 L1388.10,227.78 L1388.60,227.73 L1389.10,227.61 L1389.60,227.49 L1390.10,227.40 L1390.60,227.34 L1391.10,227.30 L1391.60,227.27 L1392.10,227.24 L1392.60,227.21 L1393.10,227.17 L1393.60,227.11 L1394.10,227.02 L1394.60,226.89 L1395.10,226.72 L1395.60,226.51 L1396.10,226.26 L1396.60,225.98 L1397.10,225.68 L1397.60,225.39 L1398.10,225.10 L1398.60,224.84 L1399.10,224.62 L1399.60,224.45 L1400.10,224.35 L1400.60,224.32 L1401.10,224.40 L1401.60,224.60 L1402.10,224.93 L1402.60,225.44 L1403.10,226.11 L1403.60,226.92 L1404.10,227.83 L1404.60,228.77 L1405.10,229.68 L1405.60,230.52 L1406.10,231.22 L1406.60,231.72 L1407.10,231.99 L1407.60,232.02 L1408.10,231.85 L1408.60,231.53 L1409.10,231.13 L1409.60,230.70 L1410.10,230.28 L1410.60,229.90 L1411.10,229.56 L1411.60,229.27 L1412.10,229.01 L1412.60,228.80 L1413.10,228.62 L1413.60,228.49 L1414.10,228.39 L1414.60,228.32 L1415.10,228.29 L1415.60,228.29 L1416.10,228.30 L1416.60,228.34 L1417.10,228.40 L1417.60,228.47 L1418.10,228.55 L1418.60,228.64 L1419.10,228.74 L1419.60,228.83 L1420.10,228.93 L1420.60,229.02 L1421.10,229.09 L1421.60,229.16 L1422.10,229.21 L1422.60,229.25 L1423.10,229.26 L1423.60,229.25 L1424.10,229.22 L1424.60,229.17 L1425.10,229.09 L1425.60,228.98 L1426.10,228.84 L1426.60,228.67 L1427.10,228.47 L1427.60,228.24 L1428.10,227.98 L1428.60,227.69 L1429.10,227.39 L1429.60,227.08 L1430.10,226.77 L1430.60,226.48 L1431.10,226.20 L1431.60,225.96 L1432.10,225.75 L1432.60,225.59 L1433.10,225.48 L1433.60,225.41 L1434.10,225.40 L1434.60,225.43 L1435.10,225.51 L1435.60,225.63 L1436.10,225.81 L1436.60,226.03 L1437.10,226.29 L1437.60,226.60 L1438.10,226.96 L1438.60,227.36 L1439.10,227.79 L1439.60,228.23 L1440.10,228.68 L1440.60,229.11 L1441.10,229.51 L1441.60,229.85 L1442.10,230.13 L1442.60,230.32 L1443.10,230.42 L1443.60,230.39 L1444.10,230.23 L1444.60,229.91 L1445.10,229.43 L1445.60,228.76 L1446.10,227.90 L1446.60,226.88 L1447.10,225.74 L1447.60,224.55 L1448.10,223.36 L1448.60,222.22 L1449.10,221.17 L1449.60,220.23 L1450.10,219.43 L1450.60,218.78 L1451.10,218.31 L1451.60,218.04 L1452.10,218.03 L1452.60,218.34 L1453.10,219.09 L1453.60,220.34 L1454.10,222.12 L1454.60,224.29 L1455.10,226.57 L1455.60,228.65 L1456.10,230.30 L1456.60,231.47 L1457.10,232.21 L1457.60,232.65 L1458.10,232.88 L1458.50,233.00" stroke="#4f9bc4" stroke-width="1.3" fill="none" stroke-linejoin="round" stroke-linecap="round"/></svg>
<svg class="a" style="left:0;top:0" width="1919" height="948" viewBox="0 0 1919 948" overflow="visible"><defs><linearGradient id="g4" x1="0" y1="0" x2="0" y2="1"><stop offset="0" stop-color="#d8ecf8" stop-opacity="0.9"/><stop offset="1" stop-color="#eef6fb" stop-opacity="0.4"/></linearGradient></defs><path d="M1790.60,219.80 L1791.10,219.94 L1791.60,220.11 L1792.10,220.35 L1792.60,220.69 L1793.10,221.15 L1793.60,221.75 L1794.10,222.44 L1794.60,223.18 L1795.10,223.93 L1795.60,224.63 L1796.10,225.24 L1796.60,225.72 L1797.10,226.06 L1797.60,226.27 L1798.10,226.38 L1798.60,226.41 L1799.10,226.38 L1799.60,226.32 L1800.10,226.25 L1800.60,226.20 L1801.10,226.17 L1801.60,226.15 L1802.10,226.14 L1802.60,226.12 L1803.10,226.08 L1803.60,226.01 L1804.10,225.90 L1804.60,225.72 L1805.10,225.48 L1805.60,225.19 L1806.10,224.85 L1806.60,224.49 L1807.10,224.13 L1807.60,223.78 L1808.10,223.46 L1808.60,223.20 L1809.10,223.01 L1809.60,222.91 L1810.10,222.93 L1810.60,223.10 L1811.10,223.46 L1811.60,224.04 L1812.10,224.85 L1812.60,225.84 L1813.10,226.94 L1813.60,228.05 L1814.10,229.09 L1814.60,229.97 L1815.10,230.61 L1815.60,230.99 L1816.10,231.14 L1816.60,231.13 L1817.10,231.04 L1817.60,230.92 L1818.10,230.76 L1818.60,230.60 L1819.10,230.42 L1819.60,230.23 L1820.10,230.04 L1820.60,229.85 L1821.10,229.66 L1821.60,229.49 L1822.10,229.32 L1822.60,229.18 L1823.10,229.05 L1823.60,228.95 L1824.10,228.86 L1824.60,228.78 L1825.10,228.71 L1825.60,228.64 L1826.10,228.58 L1826.60,228.52 L1827.10,228.46 L1827.60,228.39 L1828.10,228.32 L1828.60,228.23 L1829.10,228.13 L1829.60,228.01 L1830.10,227.87 L1830.60,227.71 L1831.10,227.52 L1831.60,227.30 L1832.10,227.06 L1832.60,226.82 L1833.10,226.57 L1833.60,226.35 L1834.10,226.16 L1834.60,226.02 L1835.10,225.93 L1835.60,225.92 L1836.10,225.97 L1836.60,226.09 L1837.10,226.25 L1837.60,226.44 L1838.10,226.66 L1838.60,226.88 L1839.10,227.11 L1839.60,227.32 L1840.10,227.51 L1840.60,227.65 L1841.10,227.75 L1841.60,227.80 L1842.10,227.79 L1842.60,227.73 L1843.10,227.63 L1843.60,227.51 L1844.10,227.38 L1844.60,227.24 L1845.10,227.12 L1845.60,227.01 L1846.10,226.94 L1846.60,226.91 L1847.10,226.93 L1847.60,227.01 L1848.10,227.13 L1848.60,227.28 L1849.10,227.45 L1849.60,227.62 L1850.10,227.79 L1850.60,227.95 L1851.10,228.07 L1851.60,228.14 L1852.10,228.16 L1852.60,228.12 L1853.10,227.99 L1853.60,227.76 L1854.10,227.43 L1854.60,226.99 L1855.10,226.41 L1855.60,225.71 L1856.10,224.89 L1856.60,223.97 L1857.10,222.97 L1857.60,221.93 L1858.10,220.88 L1858.60,219.89 L1859.10,218.99 L1859.60,218.24 L1860.10,217.69 L1860.60,217.39 L1861.10,217.43 L1861.60,217.86 L1862.10,218.78 L1862.60,220.22 L1863.10,222.09 L1863.60,224.22 L1864.10,226.37 L1864.60,228.30 L1865.10,229.87 L1865.60,231.03 L1866.10,231.87 L1866.60,232.49 L1867.10,233.00 L1867.1,234 L1790.6,234 Z" fill="url(#g4)"/><path d="M1790.60,221.00 C1791.87,222.07 1793.13,223.13 1794.40,227.40 C1794.70,228.41 1795.00,230.48 1795.30,231.10 C1796.20,232.97 1797.10,233.90 1798.00,233.90 C1820.00,233.90 1842.00,233.90 1864.00,233.90" stroke="#a9c6d6" stroke-width="1.3" fill="none" stroke-dasharray="1.3 3"/><path d="M1790.60,219.80 L1791.10,219.94 L1791.60,220.11 L1792.10,220.35 L1792.60,220.69 L1793.10,221.15 L1793.60,221.75 L1794.10,222.44 L1794.60,223.18 L1795.10,223.93 L1795.60,224.63 L1796.10,225.24 L1796.60,225.72 L1797.10,226.06 L1797.60,226.27 L1798.10,226.38 L1798.60,226.41 L1799.10,226.38 L1799.60,226.32 L1800.10,226.25 L1800.60,226.20 L1801.10,226.17 L1801.60,226.15 L1802.10,226.14 L1802.60,226.12 L1803.10,226.08 L1803.60,226.01 L1804.10,225.90 L1804.60,225.72 L1805.10,225.48 L1805.60,225.19 L1806.10,224.85 L1806.60,224.49 L1807.10,224.13 L1807.60,223.78 L1808.10,223.46 L1808.60,223.20 L1809.10,223.01 L1809.60,222.91 L1810.10,222.93 L1810.60,223.10 L1811.10,223.46 L1811.60,224.04 L1812.10,224.85 L1812.60,225.84 L1813.10,226.94 L1813.60,228.05 L1814.10,229.09 L1814.60,229.97 L1815.10,230.61 L1815.60,230.99 L1816.10,231.14 L1816.60,231.13 L1817.10,231.04 L1817.60,230.92 L1818.10,230.76 L1818.60,230.60 L1819.10,230.42 L1819.60,230.23 L1820.10,230.04 L1820.60,229.85 L1821.10,229.66 L1821.60,229.49 L1822.10,229.32 L1822.60,229.18 L1823.10,229.05 L1823.60,228.95 L1824.10,228.86 L1824.60,228.78 L1825.10,228.71 L1825.60,228.64 L1826.10,228.58 L1826.60,228.52 L1827.10,228.46 L1827.60,228.39 L1828.10,228.32 L1828.60,228.23 L1829.10,228.13 L1829.60,228.01 L1830.10,227.87 L1830.60,227.71 L1831.10,227.52 L1831.60,227.30 L1832.10,227.06 L1832.60,226.82 L1833.10,226.57 L1833.60,226.35 L1834.10,226.16 L1834.60,226.02 L1835.10,225.93 L1835.60,225.92 L1836.10,225.97 L1836.60,226.09 L1837.10,226.25 L1837.60,226.44 L1838.10,226.66 L1838.60,226.88 L1839.10,227.11 L1839.60,227.32 L1840.10,227.51 L1840.60,227.65 L1841.10,227.75 L1841.60,227.80 L1842.10,227.79 L1842.60,227.73 L1843.10,227.63 L1843.60,227.51 L1844.10,227.38 L1844.60,227.24 L1845.10,227.12 L1845.60,227.01 L1846.10,226.94 L1846.60,226.91 L1847.10,226.93 L1847.60,227.01 L1848.10,227.13 L1848.60,227.28 L1849.10,227.45 L1849.60,227.62 L1850.10,227.79 L1850.60,227.95 L1851.10,228.07 L1851.60,228.14 L1852.10,228.16 L1852.60,228.12 L1853.10,227.99 L1853.60,227.76 L1854.10,227.43 L1854.60,226.99 L1855.10,226.41 L1855.60,225.71 L1856.10,224.89 L1856.60,223.97 L1857.10,222.97 L1857.60,221.93 L1858.10,220.88 L1858.60,219.89 L1859.10,218.99 L1859.60,218.24 L1860.10,217.69 L1860.60,217.39 L1861.10,217.43 L1861.60,217.86 L1862.10,218.78 L1862.60,220.22 L1863.10,222.09 L1863.60,224.22 L1864.10,226.37 L1864.60,228.30 L1865.10,229.87 L1865.60,231.03 L1866.10,231.87 L1866.60,232.49 L1867.10,233.00" stroke="#4f9bc4" stroke-width="1.3" fill="none" stroke-linejoin="round" stroke-linecap="round"/></svg>
<div class="card" style="left:264px;top:268px;width:1075px;height:388px"></div>
<div class="ttl" style="left:280px;top:282px">Total sales over time</div>
<div class="t" style="left:280px;top:316px;font-size:21.4px;font-weight:700;color:#303030">$10,632.38</div>
<svg class="a" style="left:396px;top:323.5px" width="7" height="7" viewBox="0 0 7 7"><path d="M1 6 L4.6 2.4" stroke="#29845a" stroke-width="1.6" stroke-linecap="round"/><path d="M2.3 0.8 H6.2 V4.7 Z" fill="#29845a"/></svg><div class="t" style="left:405.8px;top:321.31px;font-size:11.7px;font-weight:700;color:#29845a">578%</div>
<div class="t" style="left:282px;top:356px;font-size:11.5px;color:#616161">$2K</div>
<div class="t" style="left:282px;top:408px;font-size:11.5px;color:#616161">$1.5K</div>
<div class="t" style="left:282px;top:460px;font-size:11.5px;color:#616161">$1K</div>
<div class="t" style="left:282px;top:512px;font-size:11.5px;color:#616161">$500</div>
<div class="t" style="left:282px;top:564px;font-size:11.5px;color:#616161">$0</div>
<div class="t" style="left:296.0px;top:586px;width:80px;text-align:center;font-size:11.5px;color:#616161">Nov 2023</div>
<div class="t" style="left:377.9px;top:586px;width:80px;text-align:center;font-size:11.5px;color:#616161">Dec 2023</div>
<div class="t" style="left:459.8px;top:586px;width:80px;text-align:center;font-size:11.5px;color:#616161">Jan 2024</div>
<div class="t" style="left:541.7px;top:586px;width:80px;text-align:center;font-size:11.5px;color:#616161">Feb 2024</div>
<div class="t" style="left:623.6px;top:586px;width:80px;text-align:center;font-size:11.5px;color:#616161">Mar 2024</div>
<div class="t" style="left:705.5px;top:586px;width:80px;text-align:center;font-size:11.5px;color:#616161">Apr 2024</div>
<div class="t" style="left:787.4000000000001px;top:586px;width:80px;text-align:center;font-size:11.5px;color:#616161">May 2024</div>
<div class="t" style="left:869.3000000000001px;top:586px;width:80px;text-align:center;font-size:11.5px;color:#616161">Jun 2024</div>
<div class="t" style="left:951.2px;top:586px;width:80px;text-align:center;font-size:11.5px;color:#616161">Jul 2024</div>
<div class="t" style="left:1033.1px;top:586px;width:80px;text-align:center;font-size:11.5px;color:#616161">Aug 2024</div>
<div class="t" style="left:1115.0px;top:586px;width:80px;text-align:center;font-size:11.5px;color:#616161">Sep 2024</div>
<div class="t" style="left:1196.9px;top:586px;width:80px;text-align:center;font-size:11.5px;color:#616161">Oct 2024</div>
<svg class="a" style="left:0;top:0" width="1919" height="948" viewBox="0 0 1919 948"><defs><linearGradient id="mg" x1="0" y1="0" x2="0" y2="1"><stop offset="0" stop-color="#f1f8fc" stop-opacity="1"/><stop offset="1" stop-color="#fafcfe" stop-opacity="1"/></linearGradient></defs><path d="M336.30,401.60 L337.30,401.85 L338.30,402.10 L339.30,402.37 L340.30,402.63 L341.30,402.91 L342.30,403.20 L343.30,403.50 L344.30,403.82 L345.30,404.15 L346.30,404.51 L347.30,404.90 L348.30,405.30 L349.30,405.74 L350.30,406.21 L351.30,406.71 L352.30,407.24 L353.30,407.82 L354.30,408.44 L355.30,409.10 L356.30,409.82 L357.30,410.61 L358.30,411.48 L359.30,412.45 L360.30,413.52 L361.30,414.72 L362.30,416.05 L363.30,417.52 L364.30,419.13 L365.30,420.88 L366.30,422.77 L367.30,424.79 L368.30,426.92 L369.30,429.16 L370.30,431.48 L371.30,433.89 L372.30,436.38 L373.30,438.94 L374.30,441.57 L375.30,444.26 L376.30,447.01 L377.30,449.81 L378.30,452.64 L379.30,455.50 L380.30,458.35 L381.30,461.17 L382.30,463.92 L383.30,466.59 L384.30,469.15 L385.30,471.57 L386.30,473.86 L387.30,475.99 L388.30,477.98 L389.30,479.83 L390.30,481.55 L391.30,483.15 L392.30,484.63 L393.30,486.00 L394.30,487.26 L395.30,488.43 L396.30,489.50 L397.30,490.49 L398.30,491.39 L399.30,492.22 L400.30,492.97 L401.30,493.66 L402.30,494.28 L403.30,494.84 L404.30,495.34 L405.30,495.79 L406.30,496.19 L407.30,496.55 L408.30,496.86 L409.30,497.14 L410.30,497.37 L411.30,497.58 L412.30,497.75 L413.30,497.89 L414.30,498.01 L415.30,498.11 L416.30,498.19 L417.30,498.24 L418.30,498.29 L419.30,498.31 L420.30,498.33 L421.30,498.33 L422.30,498.32 L423.30,498.29 L424.30,498.26 L425.30,498.21 L426.30,498.16 L427.30,498.10 L428.30,498.03 L429.30,497.96 L430.30,497.88 L431.30,497.79 L432.30,497.70 L433.30,497.60 L434.30,497.50 L435.30,497.39 L436.30,497.28 L437.30,497.16 L438.30,497.03 L439.30,496.89 L440.30,496.74 L441.30,496.58 L442.30,496.41 L443.30,496.23 L444.30,496.03 L445.30,495.83 L446.30,495.60 L447.30,495.37 L448.30,495.12 L449.30,494.86 L450.30,494.58 L451.30,494.29 L452.30,493.99 L453.30,493.69 L454.30,493.37 L455.30,493.05 L456.30,492.73 L457.30,492.41 L458.30,492.08 L459.30,491.76 L460.30,491.43 L461.30,491.11 L462.30,490.80 L463.30,490.49 L464.30,490.19 L465.30,489.90 L466.30,489.62 L467.30,489.35 L468.30,489.09 L469.30,488.84 L470.30,488.60 L471.30,488.37 L472.30,488.15 L473.30,487.95 L474.30,487.76 L475.30,487.58 L476.30,487.41 L477.30,487.26 L478.30,487.12 L479.30,487.00 L480.30,486.88 L481.30,486.78 L482.30,486.69 L483.30,486.61 L484.30,486.54 L485.30,486.47 L486.30,486.42 L487.30,486.37 L488.30,486.33 L489.30,486.29 L490.30,486.27 L491.30,486.24 L492.30,486.23 L493.30,486.21 L494.30,486.20 L495.30,486.19 L496.30,486.18 L497.30,486.17 L498.30,486.15 L499.30,486.14 L500.30,486.11 L501.30,486.08 L502.30,486.05 L503.30,486.00 L504.30,485.94 L505.30,485.86 L506.30,485.77 L507.30,485.67 L508.30,485.54 L509.30,485.40 L510.30,485.24 L511.30,485.06 L512.30,484.85 L513.30,484.62 L514.30,484.37 L515.30,484.10 L516.30,483.81 L517.30,483.49 L518.30,483.15 L519.30,482.80 L520.30,482.42 L521.30,482.01 L522.30,481.58 L523.30,481.13 L524.30,480.64 L525.30,480.12 L526.30,479.57 L527.30,478.97 L528.30,478.32 L529.30,477.63 L530.30,476.88 L531.30,476.08 L532.30,475.23 L533.30,474.34 L534.30,473.40 L535.30,472.42 L536.30,471.42 L537.30,470.38 L538.30,469.33 L539.30,468.27 L540.30,467.21 L541.30,466.14 L542.30,465.08 L543.30,464.03 L544.30,462.99 L545.30,461.96 L546.30,460.95 L547.30,459.95 L548.30,458.97 L549.30,458.01 L550.30,457.07 L551.30,456.14 L552.30,455.24 L553.30,454.36 L554.30,453.51 L555.30,452.68 L556.30,451.89 L557.30,451.13 L558.30,450.40 L559.30,449.71 L560.30,449.06 L561.30,448.46 L562.30,447.89 L563.30,447.37 L564.30,446.89 L565.30,446.46 L566.30,446.06 L567.30,445.71 L568.30,445.39 L569.30,445.11 L570.30,444.86 L571.30,444.64 L572.30,444.45 L573.30,444.29 L574.30,444.15 L575.30,444.03 L576.30,443.94 L577.30,443.87 L578.30,443.81 L579.30,443.77 L580.30,443.74 L581.30,443.72 L582.30,443.72 L583.30,443.74 L584.30,443.77 L585.30,443.83 L586.30,443.91 L587.30,444.03 L588.30,444.18 L589.30,444.37 L590.30,444.61 L591.30,444.91 L592.30,445.25 L593.30,445.66 L594.30,446.12 L595.30,446.65 L596.30,447.23 L597.30,447.87 L598.30,448.57 L599.30,449.31 L600.30,450.09 L601.30,450.92 L602.30,451.77 L603.30,452.66 L604.30,453.59 L605.30,454.56 L606.30,455.60 L607.30,456.72 L608.30,457.95 L609.30,459.33 L610.30,460.88 L611.30,462.62 L612.30,464.58 L613.30,466.74 L614.30,469.10 L615.30,471.65 L616.30,474.36 L617.30,477.19 L618.30,480.12 L619.30,483.12 L620.30,486.17 L621.30,489.24 L622.30,492.32 L623.30,495.38 L624.30,498.41 L625.30,501.39 L626.30,504.32 L627.30,507.18 L628.30,509.96 L629.30,512.63 L630.30,515.20 L631.30,517.65 L632.30,519.95 L633.30,522.11 L634.30,524.12 L635.30,525.96 L636.30,527.63 L637.30,529.15 L638.30,530.52 L639.30,531.75 L640.30,532.86 L641.30,533.88 L642.30,534.82 L643.30,535.69 L644.30,536.52 L645.30,537.31 L646.30,538.07 L647.30,538.79 L648.30,539.49 L649.30,540.14 L650.30,540.76 L651.30,541.33 L652.30,541.85 L653.30,542.31 L654.30,542.73 L655.30,543.09 L656.30,543.40 L657.30,543.66 L658.30,543.88 L659.30,544.05 L660.30,544.19 L661.30,544.30 L662.30,544.38 L663.30,544.43 L664.30,544.47 L665.30,544.48 L666.30,544.47 L667.30,544.45 L668.30,544.40 L669.30,544.33 L670.30,544.24 L671.30,544.12 L672.30,543.98 L673.30,543.81 L674.30,543.60 L675.30,543.37 L676.30,543.11 L677.30,542.81 L678.30,542.48 L679.30,542.13 L680.30,541.74 L681.30,541.32 L682.30,540.87 L683.30,540.38 L684.30,539.87 L685.30,539.33 L686.30,538.76 L687.30,538.15 L688.30,537.52 L689.30,536.84 L690.30,536.13 L691.30,535.38 L692.30,534.59 L693.30,533.74 L694.30,532.85 L695.30,531.89 L696.30,530.89 L697.30,529.82 L698.30,528.70 L699.30,527.53 L700.30,526.30 L701.30,525.03 L702.30,523.71 L703.30,522.35 L704.30,520.97 L705.30,519.56 L706.30,518.15 L707.30,516.74 L708.30,515.35 L709.30,513.99 L710.30,512.69 L711.30,511.44 L712.30,510.26 L713.30,509.16 L714.30,508.13 L715.30,507.17 L716.30,506.27 L717.30,505.43 L718.30,504.65 L719.30,503.90 L720.30,503.20 L721.30,502.53 L722.30,501.89 L723.30,501.28 L724.30,500.71 L725.30,500.16 L726.30,499.65 L727.30,499.17 L728.30,498.72 L729.30,498.30 L730.30,497.92 L731.30,497.57 L732.30,497.26 L733.30,496.98 L734.30,496.73 L735.30,496.51 L736.30,496.32 L737.30,496.16 L738.30,496.03 L739.30,495.91 L740.30,495.82 L741.30,495.75 L742.30,495.69 L743.30,495.64 L744.30,495.61 L745.30,495.59 L746.30,495.58 L747.30,495.57 L748.30,495.57 L749.30,495.57 L750.30,495.58 L751.30,495.59 L752.30,495.60 L753.30,495.61 L754.30,495.61 L755.30,495.61 L756.30,495.61 L757.30,495.60 L758.30,495.58 L759.30,495.56 L760.30,495.52 L761.30,495.48 L762.30,495.43 L763.30,495.37 L764.30,495.30 L765.30,495.23 L766.30,495.14 L767.30,495.05 L768.30,494.95 L769.30,494.84 L770.30,494.72 L771.30,494.59 L772.30,494.46 L773.30,494.31 L774.30,494.16 L775.30,493.99 L776.30,493.82 L777.30,493.63 L778.30,493.43 L779.30,493.21 L780.30,492.99 L781.30,492.75 L782.30,492.50 L783.30,492.23 L784.30,491.95 L785.30,491.67 L786.30,491.38 L787.30,491.08 L788.30,490.78 L789.30,490.48 L790.30,490.19 L791.30,489.90 L792.30,489.62 L793.30,489.35 L794.30,489.09 L795.30,488.85 L796.30,488.63 L797.30,488.42 L798.30,488.23 L799.30,488.06 L800.30,487.91 L801.30,487.78 L802.30,487.66 L803.30,487.56 L804.30,487.47 L805.30,487.39 L806.30,487.33 L807.30,487.28 L808.30,487.23 L809.30,487.20 L810.30,487.17 L811.30,487.14 L812.30,487.12 L813.30,487.10 L814.30,487.09 L815.30,487.08 L816.30,487.07 L817.30,487.06 L818.30,487.06 L819.30,487.06 L820.30,487.05 L821.30,487.05 L822.30,487.05 L823.30,487.05 L824.30,487.05 L825.30,487.06 L826.30,487.06 L827.30,487.06 L828.30,487.07 L829.30,487.07 L830.30,487.08 L831.30,487.08 L832.30,487.09 L833.30,487.09 L834.30,487.10 L835.30,487.11 L836.30,487.12 L837.30,487.13 L838.30,487.14 L839.30,487.16 L840.30,487.18 L841.30,487.21 L842.30,487.24 L843.30,487.28 L844.30,487.33 L845.30,487.39 L846.30,487.46 L847.30,487.54 L848.30,487.64 L849.30,487.74 L850.30,487.86 L851.30,488.00 L852.30,488.15 L853.30,488.31 L854.30,488.48 L855.30,488.67 L856.30,488.86 L857.30,489.07 L858.30,489.28 L859.30,489.49 L860.30,489.72 L861.30,489.94 L862.30,490.17 L863.30,490.40 L864.30,490.63 L865.30,490.86 L866.30,491.09 L867.30,491.31 L868.30,491.54 L869.30,491.76 L870.30,491.97 L871.30,492.18 L872.30,492.39 L873.30,492.59 L874.30,492.78 L875.30,492.97 L876.30,493.15 L877.30,493.32 L878.30,493.48 L879.30,493.63 L880.30,493.77 L881.30,493.90 L882.30,494.03 L883.30,494.14 L884.30,494.24 L885.30,494.34 L886.30,494.43 L887.30,494.51 L888.30,494.58 L889.30,494.65 L890.30,494.71 L891.30,494.76 L892.30,494.82 L893.30,494.86 L894.30,494.91 L895.30,494.94 L896.30,494.98 L897.30,495.02 L898.30,495.05 L899.30,495.08 L900.30,495.11 L901.30,495.14 L902.30,495.17 L903.30,495.20 L904.30,495.23 L905.30,495.26 L906.30,495.29 L907.30,495.32 L908.30,495.36 L909.30,495.39 L910.30,495.43 L911.30,495.47 L912.30,495.52 L913.30,495.56 L914.30,495.62 L915.30,495.67 L916.30,495.73 L917.30,495.80 L918.30,495.87 L919.30,495.95 L920.30,496.03 L921.30,496.13 L922.30,496.23 L923.30,496.35 L924.30,496.48 L925.30,496.63 L926.30,496.79 L927.30,496.97 L928.30,497.16 L929.30,497.38 L930.30,497.62 L931.30,497.88 L932.30,498.16 L933.30,498.47 L934.30,498.80 L935.30,499.16 L936.30,499.54 L937.30,499.95 L938.30,500.39 L939.30,500.86 L940.30,501.36 L941.30,501.89 L942.30,502.45 L943.30,503.03 L944.30,503.64 L945.30,504.28 L946.30,504.93 L947.30,505.60 L948.30,506.28 L949.30,506.96 L950.30,507.65 L951.30,508.33 L952.30,509.00 L953.30,509.67 L954.30,510.31 L955.30,510.94 L956.30,511.55 L957.30,512.13 L958.30,512.69 L959.30,513.22 L960.30,513.73 L961.30,514.21 L962.30,514.67 L963.30,515.10 L964.30,515.51 L965.30,515.89 L966.30,516.25 L967.30,516.59 L968.30,516.90 L969.30,517.18 L970.30,517.45 L971.30,517.69 L972.30,517.91 L973.30,518.10 L974.30,518.28 L975.30,518.44 L976.30,518.58 L977.30,518.71 L978.30,518.81 L979.30,518.91 L980.30,518.98 L981.30,519.05 L982.30,519.10 L983.30,519.14 L984.30,519.17 L985.30,519.18 L986.30,519.19 L987.30,519.19 L988.30,519.19 L989.30,519.17 L990.30,519.15 L991.30,519.12 L992.30,519.08 L993.30,519.03 L994.30,518.98 L995.30,518.92 L996.30,518.85 L997.30,518.77 L998.30,518.69 L999.30,518.59 L1000.30,518.49 L1001.30,518.38 L1002.30,518.26 L1003.30,518.13 L1004.30,517.98 L1005.30,517.83 L1006.30,517.66 L1007.30,517.48 L1008.30,517.28 L1009.30,517.06 L1010.30,516.82 L1011.30,516.55 L1012.30,516.25 L1013.30,515.92 L1014.30,515.55 L1015.30,515.15 L1016.30,514.70 L1017.30,514.21 L1018.30,513.68 L1019.30,513.11 L1020.30,512.49 L1021.30,511.84 L1022.30,511.15 L1023.30,510.42 L1024.30,509.67 L1025.30,508.89 L1026.30,508.09 L1027.30,507.27 L1028.30,506.43 L1029.30,505.59 L1030.30,504.73 L1031.30,503.87 L1032.30,503.00 L1033.30,502.14 L1034.30,501.29 L1035.30,500.44 L1036.30,499.62 L1037.30,498.81 L1038.30,498.02 L1039.30,497.27 L1040.30,496.55 L1041.30,495.86 L1042.30,495.21 L1043.30,494.60 L1044.30,494.04 L1045.30,493.51 L1046.30,493.02 L1047.30,492.57 L1048.30,492.15 L1049.30,491.76 L1050.30,491.40 L1051.30,491.07 L1052.30,490.76 L1053.30,490.48 L1054.30,490.21 L1055.30,489.96 L1056.30,489.72 L1057.30,489.50 L1058.30,489.30 L1059.30,489.11 L1060.30,488.93 L1061.30,488.77 L1062.30,488.62 L1063.30,488.48 L1064.30,488.36 L1065.30,488.26 L1066.30,488.17 L1067.30,488.09 L1068.30,488.03 L1069.30,487.98 L1070.30,487.95 L1071.30,487.93 L1072.30,487.93 L1073.30,487.94 L1074.30,487.96 L1075.30,487.99 L1076.30,488.03 L1077.30,488.08 L1078.30,488.13 L1079.30,488.20 L1080.30,488.26 L1081.30,488.33 L1082.30,488.40 L1083.30,488.48 L1084.30,488.55 L1085.30,488.62 L1086.30,488.68 L1087.30,488.75 L1088.30,488.82 L1089.30,488.89 L1090.30,488.96 L1091.30,489.03 L1092.30,489.10 L1093.30,489.18 L1094.30,489.27 L1095.30,489.36 L1096.30,489.46 L1097.30,489.57 L1098.30,489.69 L1099.30,489.82 L1100.30,489.96 L1101.30,490.11 L1102.30,490.27 L1103.30,490.43 L1104.30,490.60 L1105.30,490.78 L1106.30,490.96 L1107.30,491.14 L1108.30,491.33 L1109.30,491.52 L1110.30,491.72 L1111.30,491.91 L1112.30,492.11 L1113.30,492.30 L1114.30,492.50 L1115.30,492.69 L1116.30,492.88 L1117.30,493.07 L1118.30,493.25 L1119.30,493.43 L1120.30,493.60 L1121.30,493.77 L1122.30,493.94 L1123.30,494.10 L1124.30,494.26 L1125.30,494.41 L1126.30,494.56 L1127.30,494.70 L1128.30,494.84 L1129.30,494.97 L1130.30,495.10 L1131.30,495.22 L1132.30,495.34 L1133.30,495.45 L1134.30,495.56 L1135.30,495.66 L1136.30,495.75 L1137.30,495.84 L1138.30,495.93 L1139.30,496.00 L1140.30,496.07 L1141.30,496.14 L1142.30,496.20 L1143.30,496.25 L1144.30,496.29 L1145.30,496.33 L1146.30,496.36 L1147.30,496.37 L1148.30,496.38 L1149.30,496.38 L1150.30,496.37 L1151.30,496.35 L1152.30,496.31 L1153.30,496.27 L1154.30,496.21 L1155.30,496.14 L1156.30,496.06 L1157.30,495.97 L1158.30,495.86 L1159.30,495.73 L1160.30,495.59 L1161.30,495.42 L1162.30,495.22 L1163.30,494.99 L1164.30,494.71 L1165.30,494.38 L1166.30,493.99 L1167.30,493.54 L1168.30,493.01 L1169.30,492.40 L1170.30,491.71 L1171.30,490.94 L1172.30,490.09 L1173.30,489.15 L1174.30,488.13 L1175.30,487.04 L1176.30,485.86 L1177.30,484.61 L1178.30,483.28 L1179.30,481.88 L1180.30,480.40 L1181.30,478.84 L1182.30,477.18 L1183.30,475.44 L1184.30,473.59 L1185.30,471.62 L1186.30,469.52 L1187.30,467.29 L1188.30,464.91 L1189.30,462.39 L1190.30,459.73 L1191.30,456.95 L1192.30,454.05 L1193.30,451.08 L1194.30,448.05 L1195.30,445.00 L1196.30,441.95 L1197.30,438.93 L1198.30,435.97 L1199.30,433.07 L1200.30,430.27 L1201.30,427.56 L1202.30,424.95 L1203.30,422.46 L1204.30,420.08 L1205.30,417.82 L1206.30,415.68 L1207.30,413.66 L1208.30,411.76 L1209.30,409.98 L1210.30,408.32 L1211.30,406.77 L1212.30,405.32 L1213.30,403.96 L1214.30,402.70 L1215.30,401.52 L1216.30,400.42 L1217.30,399.39 L1218.30,398.44 L1219.30,397.56 L1220.30,396.74 L1221.30,395.99 L1222.30,395.29 L1223.30,394.66 L1224.30,394.09 L1225.30,393.57 L1226.30,393.10 L1227.30,392.69 L1228.30,392.33 L1229.30,392.02 L1230.30,391.75 L1231.30,391.53 L1232.30,391.35 L1233.30,391.22 L1234.30,391.13 L1235.30,391.07 L1236.30,391.06 L1237.30,391.09 L1238.30,391.17 L1239.30,391.28 L1240.30,391.43 L1241.30,391.62 L1242.30,391.86 L1243.30,392.14 L1244.30,392.47 L1245.30,392.85 L1246.30,393.28 L1247.30,393.76 L1248.30,394.29 L1249.30,394.89 L1250.30,395.54 L1251.30,396.27 L1252.30,397.08 L1253.30,397.97 L1254.30,398.94 L1255.30,400.02 L1256.30,401.19 L1257.30,402.47 L1258.30,403.87 L1259.30,405.39 L1260.30,407.03 L1261.30,408.81 L1262.30,410.73 L1263.30,412.79 L1264.30,415.00 L1265.30,417.38 L1266.30,419.92 L1267.30,422.64 L1268.30,425.54 L1269.30,428.65 L1270.30,431.96 L1271.30,435.49 L1272.30,439.26 L1273.30,443.28 L1274.30,447.54 L1275.30,452.02 L1276.30,456.71 L1277.30,461.58 L1278.30,466.56 L1279.30,471.61 L1280.30,476.68 L1281.30,481.71 L1282.30,486.66 L1283.30,491.50 L1284.30,496.19 L1285.30,500.73 L1286.30,505.10 L1287.30,509.28 L1288.30,513.26 L1289.30,517.04 L1290.30,520.60 L1291.30,523.93 L1292.30,527.04 L1293.30,529.91 L1294.30,532.55 L1295.30,534.96 L1296.30,537.16 L1297.30,539.15 L1298.30,540.95 L1299.30,542.57 L1300.30,544.05 L1301.30,545.38 L1302.30,546.59 L1303.30,547.68 L1304.30,548.67 L1305.30,549.56 L1306.30,550.36 L1307.30,551.08 L1308.30,551.71 L1309.30,552.27 L1310.30,552.75 L1311.30,553.17 L1312.30,553.52 L1313.30,553.82 L1314.30,554.07 L1315.30,554.29 L1316.30,554.49 L1317.30,554.66 L1318.20,554.80 L1318.3,570 L335.7,570 Z" fill="url(#mg)"/><rect x="336" y="361" width="983" height="2" fill="#e9e9e9" fill-opacity="0.45"/><rect x="336" y="413" width="983" height="2" fill="#e9e9e9" fill-opacity="0.45"/><rect x="336" y="465" width="983" height="2" fill="#e9e9e9" fill-opacity="0.45"/><rect x="336" y="517" width="983" height="2" fill="#e9e9e9" fill-opacity="0.45"/><rect x="336" y="569" width="983" height="2" fill="#e9e9e9" fill-opacity="0.45"/><path d="M336.30,421.60 L337.30,421.68 L338.30,421.78 L339.30,421.93 L340.30,422.08 L341.30,422.27 L342.30,422.51 L343.30,422.80 L344.30,423.15 L345.30,423.56 L346.30,424.05 L347.30,424.60 L348.30,425.22 L349.30,425.91 L350.30,426.67 L351.30,427.49 L352.30,428.37 L353.30,429.33 L354.30,430.35 L355.30,431.45 L356.30,432.64 L357.30,433.93 L358.30,435.33 L359.30,436.87 L360.30,438.54 L361.30,440.36 L362.30,442.32 L363.30,444.43 L364.30,446.68 L365.30,449.05 L366.30,451.52 L367.30,454.09 L368.30,456.77 L369.30,459.57 L370.30,462.53 L371.30,465.68 L372.30,469.07 L373.30,472.73 L374.30,476.66 L375.30,480.80 L376.30,485.08 L377.30,489.43 L378.30,493.75 L379.30,497.94 L380.30,501.93 L381.30,505.68 L382.30,509.20 L383.30,512.52 L384.30,515.67 L385.30,518.68 L386.30,521.57 L387.30,524.35 L388.30,527.02 L389.30,529.55 L390.30,531.92 L391.30,534.11 L392.30,536.11 L393.30,537.92 L394.30,539.57 L395.30,541.07 L396.30,542.45 L397.30,543.74 L398.30,544.94 L399.30,546.09 L400.30,547.16 L401.30,548.18 L402.30,549.13 L403.30,550.00 L404.30,550.80 L405.30,551.51 L406.30,552.13 L407.30,552.67 L408.30,553.12 L409.30,553.50 L410.30,553.81 L411.30,554.06 L412.30,554.25 L413.30,554.41 L414.30,554.52 L415.30,554.61 L416.30,554.68 L417.30,554.73 L418.30,554.77 L419.30,554.80 L420.30,554.81 L421.30,554.82 L422.30,554.83 L423.30,554.83 L424.30,554.83 L425.30,554.84 L426.30,554.85 L427.30,554.87 L428.30,554.90 L429.30,554.95 L430.30,555.00 L431.30,555.07 L432.30,555.16 L433.30,555.26 L434.30,555.38 L435.30,555.51 L436.30,555.66 L437.30,555.82 L438.30,556.00 L439.30,556.19 L440.30,556.39 L441.30,556.61 L442.30,556.83 L443.30,557.07 L444.30,557.31 L445.30,557.57 L446.30,557.84 L447.30,558.11 L448.30,558.40 L449.30,558.70 L450.30,559.01 L451.30,559.34 L452.30,559.67 L453.30,560.02 L454.30,560.38 L455.30,560.75 L456.30,561.13 L457.30,561.52 L458.30,561.93 L459.30,562.33 L460.30,562.74 L461.30,563.16 L462.30,563.57 L463.30,563.98 L464.30,564.38 L465.30,564.78 L466.30,565.16 L467.30,565.53 L468.30,565.89 L469.30,566.23 L470.30,566.55 L471.30,566.85 L472.30,567.14 L473.30,567.40 L474.30,567.65 L475.30,567.88 L476.30,568.09 L477.30,568.29 L478.30,568.47 L479.30,568.64 L480.30,568.80 L481.30,568.94 L482.30,569.08 L483.30,569.20 L484.30,569.32 L485.30,569.42 L486.30,569.52 L487.30,569.61 L488.30,569.69 L489.30,569.77 L490.30,569.83 L491.30,569.89 L492.30,569.94 L493.30,569.98 L494.30,570.01 L495.30,570.03 L496.30,570.05 L497.30,570.06 L498.30,570.06 L499.30,570.06 L500.30,570.06 L501.30,570.05 L502.30,570.04 L503.30,570.03 L504.30,570.01 L505.00,570.00 L1319,570" stroke="#9db5c3" stroke-width="1.7" fill="none" stroke-dasharray="1.7 2.4"/><path d="M336.30,401.60 L337.30,401.85 L338.30,402.10 L339.30,402.37 L340.30,402.63 L341.30,402.91 L342.30,403.20 L343.30,403.50 L344.30,403.82 L345.30,404.15 L346.30,404.51 L347.30,404.90 L348.30,405.30 L349.30,405.74 L350.30,406.21 L351.30,406.71 L352.30,407.24 L353.30,407.82 L354.30,408.44 L355.30,409.10 L356.30,409.82 L357.30,410.61 L358.30,411.48 L359.30,412.45 L360.30,413.52 L361.30,414.72 L362.30,416.05 L363.30,417.52 L364.30,419.13 L365.30,420.88 L366.30,422.77 L367.30,424.79 L368.30,426.92 L369.30,429.16 L370.30,431.48 L371.30,433.89 L372.30,436.38 L373.30,438.94 L374.30,441.57 L375.30,444.26 L376.30,447.01 L377.30,449.81 L378.30,452.64 L379.30,455.50 L380.30,458.35 L381.30,461.17 L382.30,463.92 L383.30,466.59 L384.30,469.15 L385.30,471.57 L386.30,473.86 L387.30,475.99 L388.30,477.98 L389.30,479.83 L390.30,481.55 L391.30,483.15 L392.30,484.63 L393.30,486.00 L394.30,487.26 L395.30,488.43 L396.30,489.50 L397.30,490.49 L398.30,491.39 L399.30,492.22 L400.30,492.97 L401.30,493.66 L402.30,494.28 L403.30,494.84 L404.30,495.34 L405.30,495.79 L406.30,496.19 L407.30,496.55 L408.30,496.86 L409.30,497.14 L410.30,497.37 L411.30,497.58 L412.30,497.75 L413.30,497.89 L414.30,498.01 L415.30,498.11 L416.30,498.19 L417.30,498.24 L418.30,498.29 L419.30,498.31 L420.30,498.33 L421.30,498.33 L422.30,498.32 L423.30,498.29 L424.30,498.26 L425.30,498.21 L426.30,498.16 L427.30,498.10 L428.30,498.03 L429.30,497.96 L430.30,497.88 L431.30,497.79 L432.30,497.70 L433.30,497.60 L434.30,497.50 L435.30,497.39 L436.30,497.28 L437.30,497.16 L438.30,497.03 L439.30,496.89 L440.30,496.74 L441.30,496.58 L442.30,496.41 L443.30,496.23 L444.30,496.03 L445.30,495.83 L446.30,495.60 L447.30,495.37 L448.30,495.12 L449.30,494.86 L450.30,494.58 L451.30,494.29 L452.30,493.99 L453.30,493.69 L454.30,493.37 L455.30,493.05 L456.30,492.73 L457.30,492.41 L458.30,492.08 L459.30,491.76 L460.30,491.43 L461.30,491.11 L462.30,490.80 L463.30,490.49 L464.30,490.19 L465.30,489.90 L466.30,489.62 L467.30,489.35 L468.30,489.09 L469.30,488.84 L470.30,488.60 L471.30,488.37 L472.30,488.15 L473.30,487.95 L474.30,487.76 L475.30,487.58 L476.30,487.41 L477.30,487.26 L478.30,487.12 L479.30,487.00 L480.30,486.88 L481.30,486.78 L482.30,486.69 L483.30,486.61 L484.30,486.54 L485.30,486.47 L486.30,486.42 L487.30,486.37 L488.30,486.33 L489.30,486.29 L490.30,486.27 L491.30,486.24 L492.30,486.23 L493.30,486.21 L494.30,486.20 L495.30,486.19 L496.30,486.18 L497.30,486.17 L498.30,486.15 L499.30,486.14 L500.30,486.11 L501.30,486.08 L502.30,486.05 L503.30,486.00 L504.30,485.94 L505.30,485.86 L506.30,485.77 L507.30,485.67 L508.30,485.54 L509.30,485.40 L510.30,485.24 L511.30,485.06 L512.30,484.85 L513.30,484.62 L514.30,484.37 L515.30,484.10 L516.30,483.81 L517.30,483.49 L518.30,483.15 L519.30,482.80 L520.30,482.42 L521.30,482.01 L522.30,481.58 L523.30,481.13 L524.30,480.64 L525.30,480.12 L526.30,479.57 L527.30,478.97 L528.30,478.32 L529.30,477.63 L530.30,476.88 L531.30,476.08 L532.30,475.23 L533.30,474.34 L534.30,473.40 L535.30,472.42 L536.30,471.42 L537.30,470.38 L538.30,469.33 L539.30,468.27 L540.30,467.21 L541.30,466.14 L542.30,465.08 L543.30,464.03 L544.30,462.99 L545.30,461.96 L546.30,460.95 L547.30,459.95 L548.30,458.97 L549.30,458.01 L550.30,457.07 L551.30,456.14 L552.30,455.24 L553.30,454.36 L554.30,453.51 L555.30,452.68 L556.30,451.89 L557.30,451.13 L558.30,450.40 L559.30,449.71 L560.30,449.06 L561.30,448.46 L562.30,447.89 L563.30,447.37 L564.30,446.89 L565.30,446.46 L566.30,446.06 L567.30,445.71 L568.30,445.39 L569.30,445.11 L570.30,444.86 L571.30,444.64 L572.30,444.45 L573.30,444.29 L574.30,444.15 L575.30,444.03 L576.30,443.94 L577.30,443.87 L578.30,443.81 L579.30,443.77 L580.30,443.74 L581.30,443.72 L582.30,443.72 L583.30,443.74 L584.30,443.77 L585.30,443.83 L586.30,443.91 L587.30,444.03 L588.30,444.18 L589.30,444.37 L590.30,444.61 L591.30,444.91 L592.30,445.25 L593.30,445.66 L594.30,446.12 L595.30,446.65 L596.30,447.23 L597.30,447.87 L598.30,448.57 L599.30,449.31 L600.30,450.09 L601.30,450.92 L602.30,451.77 L603.30,452.66 L604.30,453.59 L605.30,454.56 L606.30,455.60 L607.30,456.72 L608.30,457.95 L609.30,459.33 L610.30,460.88 L611.30,462.62 L612.30,464.58 L613.30,466.74 L614.30,469.10 L615.30,471.65 L616.30,474.36 L617.30,477.19 L618.30,480.12 L619.30,483.12 L620.30,486.17 L621.30,489.24 L622.30,492.32 L623.30,495.38 L624.30,498.41 L625.30,501.39 L626.30,504.32 L627.30,507.18 L628.30,509.96 L629.30,512.63 L630.30,515.20 L631.30,517.65 L632.30,519.95 L633.30,522.11 L634.30,524.12 L635.30,525.96 L636.30,527.63 L637.30,529.15 L638.30,530.52 L639.30,531.75 L640.30,532.86 L641.30,533.88 L642.30,534.82 L643.30,535.69 L644.30,536.52 L645.30,537.31 L646.30,538.07 L647.30,538.79 L648.30,539.49 L649.30,540.14 L650.30,540.76 L651.30,541.33 L652.30,541.85 L653.30,542.31 L654.30,542.73 L655.30,543.09 L656.30,543.40 L657.30,543.66 L658.30,543.88 L659.30,544.05 L660.30,544.19 L661.30,544.30 L662.30,544.38 L663.30,544.43 L664.30,544.47 L665.30,544.48 L666.30,544.47 L667.30,544.45 L668.30,544.40 L669.30,544.33 L670.30,544.24 L671.30,544.12 L672.30,543.98 L673.30,543.81 L674.30,543.60 L675.30,543.37 L676.30,543.11 L677.30,542.81 L678.30,542.48 L679.30,542.13 L680.30,541.74 L681.30,541.32 L682.30,540.87 L683.30,540.38 L684.30,539.87 L685.30,539.33 L686.30,538.76 L687.30,538.15 L688.30,537.52 L689.30,536.84 L690.30,536.13 L691.30,535.38 L692.30,534.59 L693.30,533.74 L694.30,532.85 L695.30,531.89 L696.30,530.89 L697.30,529.82 L698.30,528.70 L699.30,527.53 L700.30,526.30 L701.30,525.03 L702.30,523.71 L703.30,522.35 L704.30,520.97 L705.30,519.56 L706.30,518.15 L707.30,516.74 L708.30,515.35 L709.30,513.99 L710.30,512.69 L711.30,511.44 L712.30,510.26 L713.30,509.16 L714.30,508.13 L715.30,507.17 L716.30,506.27 L717.30,505.43 L718.30,504.65 L719.30,503.90 L720.30,503.20 L721.30,502.53 L722.30,501.89 L723.30,501.28 L724.30,500.71 L725.30,500.16 L726.30,499.65 L727.30,499.17 L728.30,498.72 L729.30,498.30 L730.30,497.92 L731.30,497.57 L732.30,497.26 L733.30,496.98 L734.30,496.73 L735.30,496.51 L736.30,496.32 L737.30,496.16 L738.30,496.03 L739.30,495.91 L740.30,495.82 L741.30,495.75 L742.30,495.69 L743.30,495.64 L744.30,495.61 L745.30,495.59 L746.30,495.58 L747.30,495.57 L748.30,495.57 L749.30,495.57 L750.30,495.58 L751.30,495.59 L752.30,495.60 L753.30,495.61 L754.30,495.61 L755.30,495.61 L756.30,495.61 L757.30,495.60 L758.30,495.58 L759.30,495.56 L760.30,495.52 L761.30,495.48 L762.30,495.43 L763.30,495.37 L764.30,495.30 L765.30,495.23 L766.30,495.14 L767.30,495.05 L768.30,494.95 L769.30,494.84 L770.30,494.72 L771.30,494.59 L772.30,494.46 L773.30,494.31 L774.30,494.16 L775.30,493.99 L776.30,493.82 L777.30,493.63 L778.30,493.43 L779.30,493.21 L780.30,492.99 L781.30,492.75 L782.30,492.50 L783.30,492.23 L784.30,491.95 L785.30,491.67 L786.30,491.38 L787.30,491.08 L788.30,490.78 L789.30,490.48 L790.30,490.19 L791.30,489.90 L792.30,489.62 L793.30,489.35 L794.30,489.09 L795.30,488.85 L796.30,488.63 L797.30,488.42 L798.30,488.23 L799.30,488.06 L800.30,487.91 L801.30,487.78 L802.30,487.66 L803.30,487.56 L804.30,487.47 L805.30,487.39 L806.30,487.33 L807.30,487.28 L808.30,487.23 L809.30,487.20 L810.30,487.17 L811.30,487.14 L812.30,487.12 L813.30,487.10 L814.30,487.09 L815.30,487.08 L816.30,487.07 L817.30,487.06 L818.30,487.06 L819.30,487.06 L820.30,487.05 L821.30,487.05 L822.30,487.05 L823.30,487.05 L824.30,487.05 L825.30,487.06 L826.30,487.06 L827.30,487.06 L828.30,487.07 L829.30,487.07 L830.30,487.08 L831.30,487.08 L832.30,487.09 L833.30,487.09 L834.30,487.10 L835.30,487.11 L836.30,487.12 L837.30,487.13 L838.30,487.14 L839.30,487.16 L840.30,487.18 L841.30,487.21 L842.30,487.24 L843.30,487.28 L844.30,487.33 L845.30,487.39 L846.30,487.46 L847.30,487.54 L848.30,487.64 L849.30,487.74 L850.30,487.86 L851.30,488.00 L852.30,488.15 L853.30,488.31 L854.30,488.48 L855.30,488.67 L856.30,488.86 L857.30,489.07 L858.30,489.28 L859.30,489.49 L860.30,489.72 L861.30,489.94 L862.30,490.17 L863.30,490.40 L864.30,490.63 L865.30,490.86 L866.30,491.09 L867.30,491.31 L868.30,491.54 L869.30,491.76 L870.30,491.97 L871.30,492.18 L872.30,492.39 L873.30,492.59 L874.30,492.78 L875.30,492.97 L876.30,493.15 L877.30,493.32 L878.30,493.48 L879.30,493.63 L880.30,493.77 L881.30,493.90 L882.30,494.03 L883.30,494.14 L884.30,494.24 L885.30,494.34 L886.30,494.43 L887.30,494.51 L888.30,494.58 L889.30,494.65 L890.30,494.71 L891.30,494.76 L892.30,494.82 L893.30,494.86 L894.30,494.91 L895.30,494.94 L896.30,494.98 L897.30,495.02 L898.30,495.05 L899.30,495.08 L900.30,495.11 L901.30,495.14 L902.30,495.17 L903.30,495.20 L904.30,495.23 L905.30,495.26 L906.30,495.29 L907.30,495.32 L908.30,495.36 L909.30,495.39 L910.30,495.43 L911.30,495.47 L912.30,495.52 L913.30,495.56 L914.30,495.62 L915.30,495.67 L916.30,495.73 L917.30,495.80 L918.30,495.87 L919.30,495.95 L920.30,496.03 L921.30,496.13 L922.30,496.23 L923.30,496.35 L924.30,496.48 L925.30,496.63 L926.30,496.79 L927.30,496.97 L928.30,497.16 L929.30,497.38 L930.30,497.62 L931.30,497.88 L932.30,498.16 L933.30,498.47 L934.30,498.80 L935.30,499.16 L936.30,499.54 L937.30,499.95 L938.30,500.39 L939.30,500.86 L940.30,501.36 L941.30,501.89 L942.30,502.45 L943.30,503.03 L944.30,503.64 L945.30,504.28 L946.30,504.93 L947.30,505.60 L948.30,506.28 L949.30,506.96 L950.30,507.65 L951.30,508.33 L952.30,509.00 L953.30,509.67 L954.30,510.31 L955.30,510.94 L956.30,511.55 L957.30,512.13 L958.30,512.69 L959.30,513.22 L960.30,513.73 L961.30,514.21 L962.30,514.67 L963.30,515.10 L964.30,515.51 L965.30,515.89 L966.30,516.25 L967.30,516.59 L968.30,516.90 L969.30,517.18 L970.30,517.45 L971.30,517.69 L972.30,517.91 L973.30,518.10 L974.30,518.28 L975.30,518.44 L976.30,518.58 L977.30,518.71 L978.30,518.81 L979.30,518.91 L980.30,518.98 L981.30,519.05 L982.30,519.10 L983.30,519.14 L984.30,519.17 L985.30,519.18 L986.30,519.19 L987.30,519.19 L988.30,519.19 L989.30,519.17 L990.30,519.15 L991.30,519.12 L992.30,519.08 L993.30,519.03 L994.30,518.98 L995.30,518.92 L996.30,518.85 L997.30,518.77 L998.30,518.69 L999.30,518.59 L1000.30,518.49 L1001.30,518.38 L1002.30,518.26 L1003.30,518.13 L1004.30,517.98 L1005.30,517.83 L1006.30,517.66 L1007.30,517.48 L1008.30,517.28 L1009.30,517.06 L1010.30,516.82 L1011.30,516.55 L1012.30,516.25 L1013.30,515.92 L1014.30,515.55 L1015.30,515.15 L1016.30,514.70 L1017.30,514.21 L1018.30,513.68 L1019.30,513.11 L1020.30,512.49 L1021.30,511.84 L1022.30,511.15 L1023.30,510.42 L1024.30,509.67 L1025.30,508.89 L1026.30,508.09 L1027.30,507.27 L1028.30,506.43 L1029.30,505.59 L1030.30,504.73 L1031.30,503.87 L1032.30,503.00 L1033.30,502.14 L1034.30,501.29 L1035.30,500.44 L1036.30,499.62 L1037.30,498.81 L1038.30,498.02 L1039.30,497.27 L1040.30,496.55 L1041.30,495.86 L1042.30,495.21 L1043.30,494.60 L1044.30,494.04 L1045.30,493.51 L1046.30,493.02 L1047.30,492.57 L1048.30,492.15 L1049.30,491.76 L1050.30,491.40 L1051.30,491.07 L1052.30,490.76 L1053.30,490.48 L1054.30,490.21 L1055.30,489.96 L1056.30,489.72 L1057.30,489.50 L1058.30,489.30 L1059.30,489.11 L1060.30,488.93 L1061.30,488.77 L1062.30,488.62 L1063.30,488.48 L1064.30,488.36 L1065.30,488.26 L1066.30,488.17 L1067.30,488.09 L1068.30,488.03 L1069.30,487.98 L1070.30,487.95 L1071.30,487.93 L1072.30,487.93 L1073.30,487.94 L1074.30,487.96 L1075.30,487.99 L1076.30,488.03 L1077.30,488.08 L1078.30,488.13 L1079.30,488.20 L1080.30,488.26 L1081.30,488.33 L1082.30,488.40 L1083.30,488.48 L1084.30,488.55 L1085.30,488.62 L1086.30,488.68 L1087.30,488.75 L1088.30,488.82 L1089.30,488.89 L1090.30,488.96 L1091.30,489.03 L1092.30,489.10 L1093.30,489.18 L1094.30,489.27 L1095.30,489.36 L1096.30,489.46 L1097.30,489.57 L1098.30,489.69 L1099.30,489.82 L1100.30,489.96 L1101.30,490.11 L1102.30,490.27 L1103.30,490.43 L1104.30,490.60 L1105.30,490.78 L1106.30,490.96 L1107.30,491.14 L1108.30,491.33 L1109.30,491.52 L1110.30,491.72 L1111.30,491.91 L1112.30,492.11 L1113.30,492.30 L1114.30,492.50 L1115.30,492.69 L1116.30,492.88 L1117.30,493.07 L1118.30,493.25 L1119.30,493.43 L1120.30,493.60 L1121.30,493.77 L1122.30,493.94 L1123.30,494.10 L1124.30,494.26 L1125.30,494.41 L1126.30,494.56 L1127.30,494.70 L1128.30,494.84 L1129.30,494.97 L1130.30,495.10 L1131.30,495.22 L1132.30,495.34 L1133.30,495.45 L1134.30,495.56 L1135.30,495.66 L1136.30,495.75 L1137.30,495.84 L1138.30,495.93 L1139.30,496.00 L1140.30,496.07 L1141.30,496.14 L1142.30,496.20 L1143.30,496.25 L1144.30,496.29 L1145.30,496.33 L1146.30,496.36 L1147.30,496.37 L1148.30,496.38 L1149.30,496.38 L1150.30,496.37 L1151.30,496.35 L1152.30,496.31 L1153.30,496.27 L1154.30,496.21 L1155.30,496.14 L1156.30,496.06 L1157.30,495.97 L1158.30,495.86 L1159.30,495.73 L1160.30,495.59 L1161.30,495.42 L1162.30,495.22 L1163.30,494.99 L1164.30,494.71 L1165.30,494.38 L1166.30,493.99 L1167.30,493.54 L1168.30,493.01 L1169.30,492.40 L1170.30,491.71 L1171.30,490.94 L1172.30,490.09 L1173.30,489.15 L1174.30,488.13 L1175.30,487.04 L1176.30,485.86 L1177.30,484.61 L1178.30,483.28 L1179.30,481.88 L1180.30,480.40 L1181.30,478.84 L1182.30,477.18 L1183.30,475.44 L1184.30,473.59 L1185.30,471.62 L1186.30,469.52 L1187.30,467.29 L1188.30,464.91 L1189.30,462.39 L1190.30,459.73 L1191.30,456.95 L1192.30,454.05 L1193.30,451.08 L1194.30,448.05 L1195.30,445.00 L1196.30,441.95 L1197.30,438.93 L1198.30,435.97 L1199.30,433.07 L1200.30,430.27 L1201.30,427.56 L1202.30,424.95 L1203.30,422.46 L1204.30,420.08 L1205.30,417.82 L1206.30,415.68 L1207.30,413.66 L1208.30,411.76 L1209.30,409.98 L1210.30,408.32 L1211.30,406.77 L1212.30,405.32 L1213.30,403.96 L1214.30,402.70 L1215.30,401.52 L1216.30,400.42 L1217.30,399.39 L1218.30,398.44 L1219.30,397.56 L1220.30,396.74 L1221.30,395.99 L1222.30,395.29 L1223.30,394.66 L1224.30,394.09 L1225.30,393.57 L1226.30,393.10 L1227.30,392.69 L1228.30,392.33 L1229.30,392.02 L1230.30,391.75 L1231.30,391.53 L1232.30,391.35 L1233.30,391.22 L1234.30,391.13 L1235.30,391.07 L1236.30,391.06 L1237.30,391.09 L1238.30,391.17 L1239.30,391.28 L1240.30,391.43 L1241.30,391.62 L1242.30,391.86 L1243.30,392.14 L1244.30,392.47 L1245.30,392.85 L1246.30,393.28 L1247.30,393.76 L1248.30,394.29 L1249.30,394.89 L1250.30,395.54 L1251.30,396.27 L1252.30,397.08 L1253.30,397.97 L1254.30,398.94 L1255.30,400.02 L1256.30,401.19 L1257.30,402.47 L1258.30,403.87 L1259.30,405.39 L1260.30,407.03 L1261.30,408.81 L1262.30,410.73 L1263.30,412.79 L1264.30,415.00 L1265.30,417.38 L1266.30,419.92 L1267.30,422.64 L1268.30,425.54 L1269.30,428.65 L1270.30,431.96 L1271.30,435.49 L1272.30,439.26 L1273.30,443.28 L1274.30,447.54 L1275.30,452.02 L1276.30,456.71 L1277.30,461.58 L1278.30,466.56 L1279.30,471.61 L1280.30,476.68 L1281.30,481.71 L1282.30,486.66 L1283.30,491.50 L1284.30,496.19 L1285.30,500.73 L1286.30,505.10 L1287.30,509.28 L1288.30,513.26 L1289.30,517.04 L1290.30,520.60 L1291.30,523.93 L1292.30,527.04 L1293.30,529.91 L1294.30,532.55 L1295.30,534.96 L1296.30,537.16 L1297.30,539.15 L1298.30,540.95 L1299.30,542.57 L1300.30,544.05 L1301.30,545.38 L1302.30,546.59 L1303.30,547.68 L1304.30,548.67 L1305.30,549.56 L1306.30,550.36 L1307.30,551.08 L1308.30,551.71 L1309.30,552.27 L1310.30,552.75 L1311.30,553.17 L1312.30,553.52 L1313.30,553.82 L1314.30,554.07 L1315.30,554.29 L1316.30,554.49 L1317.30,554.66 L1318.20,554.80" stroke="#4f9bc4" stroke-width="2" fill="none" stroke-linecap="round"/></svg>
<div class="a" style="left:652px;top:628px;width:14px;height:2px;background:#4f9bc4;border-radius:1px"></div>
<div class="t" style="left:672px;top:623px;font-size:11.5px;color:#616161">Nov 4, 2023–Nov 2, 2024</div>
<svg class="a" style="left:822px;top:627px" width="16" height="4"><path d="M1 2 H15" stroke="#8fbfd6" stroke-width="1.6" stroke-dasharray="1.6 3"/></svg>
<div class="t" style="left:844px;top:623px;font-size:11.5px;color:#616161">Oct 4–Nov 3, 2024</div>
<div class="card" style="left:1355px;top:268px;width:530px;height:388px"></div>
<div class="ttl" style="left:1371px;top:282px">Total sales breakdown</div>
<div class="a" style="left:1371px;top:311.0px;width:494px;height:36px;border-radius:8px;background:#f7f7f7"></div>
<div class="t" style="left:1383px;top:323.0px;font-size:13.7px;color:#303030;-webkit-text-stroke:0.15px #303030">Gross sales</div>
<div class="t" style="right:114px;top:323.0px;font-size:13.7px;color:#303030;-webkit-text-stroke:0.15px #303030">$9,660.55</div>
<svg class="a" style="left:1813px;top:326.5px" width="7" height="7" viewBox="0 0 7 7"><path d="M1 6 L4.6 2.4" stroke="#29845a" stroke-width="1.6" stroke-linecap="round"/><path d="M2.3 0.8 H6.2 V4.7 Z" fill="#29845a"/></svg><div class="t" style="left:1822.8px;top:324.41px;font-size:11.5px;font-weight:700;color:#29845a">579%</div>
<div class="a" style="left:1371px;top:352.0px;width:494px;height:36px;border-radius:8px;background:#f7f7f7"></div>
<div class="t" style="left:1383px;top:364.0px;font-size:13.7px;color:#303030;-webkit-text-stroke:0.15px #303030">Discounts</div>
<div class="t" style="right:114px;top:364.0px;font-size:13.7px;color:#303030;-webkit-text-stroke:0.15px #303030">-$163.38</div>
<div class="a" style="left:1828px;top:369px;width:11px;height:2px;background:#9a9a9a"></div>
<div class="a" style="left:1371px;top:392.0px;width:494px;height:36px;border-radius:8px;background:#f7f7f7"></div>
<div class="t" style="left:1383px;top:404.0px;font-size:13.7px;color:#303030;-webkit-text-stroke:0.15px #303030">Returns</div>
<div class="t" style="right:114px;top:404.0px;font-size:13.7px;color:#303030;-webkit-text-stroke:0.15px #303030">-$31.90</div>
<div class="a" style="left:1828px;top:409px;width:11px;height:2px;background:#9a9a9a"></div>
<div class="a" style="left:1371px;top:433.0px;width:494px;height:36px;border-radius:8px;background:#f7f7f7"></div>
<div class="t" style="left:1383px;top:445.0px;font-size:13.7px;color:#303030;-webkit-text-stroke:0.15px #303030">Net sales</div>
<div class="t" style="right:114px;top:445.0px;font-size:13.7px;color:#303030;-webkit-text-stroke:0.15px #303030">$9,465.27</div>
<svg class="a" style="left:1813px;top:448.5px" width="7" height="7" viewBox="0 0 7 7"><path d="M1 6 L4.6 2.4" stroke="#29845a" stroke-width="1.6" stroke-linecap="round"/><path d="M2.3 0.8 H6.2 V4.7 Z" fill="#29845a"/></svg><div class="t" style="left:1822.8px;top:446.41px;font-size:11.5px;font-weight:700;color:#29845a">565%</div>
<div class="a" style="left:1371px;top:474.0px;width:494px;height:36px;border-radius:8px;background:#f7f7f7"></div>
<div class="t" style="left:1383px;top:486.0px;font-size:13.7px;color:#303030;-webkit-text-stroke:0.15px #303030">Shipping charges</div>
<div class="t" style="right:114px;top:486.0px;font-size:13.7px;color:#303030;-webkit-text-stroke:0.15px #303030">$1,167.11</div>
<svg class="a" style="left:1813px;top:489.5px" width="7" height="7" viewBox="0 0 7 7"><path d="M1 6 L4.6 2.4" stroke="#29845a" stroke-width="1.6" stroke-linecap="round"/><path d="M2.3 0.8 H6.2 V4.7 Z" fill="#29845a"/></svg><div class="t" style="left:1822.8px;top:487.41px;font-size:11.5px;font-weight:700;color:#29845a">701%</div>
<div class="a" style="left:1371px;top:514.0px;width:494px;height:36px;border-radius:8px;background:#f7f7f7"></div>
<div class="t" style="left:1383px;top:526.0px;font-size:13.7px;color:#303030;-webkit-text-stroke:0.15px #303030">Return fees</div>
<div class="t" style="right:114px;top:526.0px;font-size:13.7px;color:#303030;-webkit-text-stroke:0.15px #303030">$0.00</div>
<div class="a" style="left:1828px;top:531px;width:11px;height:2px;background:#9a9a9a"></div>
<div class="a" style="left:1371px;top:555.0px;width:494px;height:36px;border-radius:8px;background:#f7f7f7"></div>
<div class="t" style="left:1383px;top:567.0px;font-size:13.7px;color:#303030;-webkit-text-stroke:0.15px #303030">Taxes</div>
<div class="t" style="right:114px;top:567.0px;font-size:13.7px;color:#303030;-webkit-text-stroke:0.15px #303030">$0.00</div>
<div class="a" style="left:1828px;top:572px;width:11px;height:2px;background:#9a9a9a"></div>
<div class="a" style="left:1371px;top:596.0px;width:494px;height:36px;border-radius:8px;background:#f7f7f7"></div>
<div class="t" style="left:1383px;top:608.0px;font-size:13.7px;color:#303030;-webkit-text-stroke:0.15px #303030">Total sales</div>
<div class="t" style="right:114px;top:608.0px;font-size:13.7px;color:#303030;-webkit-text-stroke:0.15px #303030">$10,632.38</div>
<svg class="a" style="left:1813px;top:611.5px" width="7" height="7" viewBox="0 0 7 7"><path d="M1 6 L4.6 2.4" stroke="#29845a" stroke-width="1.6" stroke-linecap="round"/><path d="M2.3 0.8 H6.2 V4.7 Z" fill="#29845a"/></svg><div class="t" style="left:1822.8px;top:609.41px;font-size:11.5px;font-weight:700;color:#29845a">578%</div>
<div class="card" style="left:264px;top:673px;width:530px;height:252px"></div>
<div class="ttl" style="left:280px;top:687px">Total sales by sales channel</div>
<svg class="a" style="left:0;top:0" width="1919" height="948" viewBox="0 0 1919 948"><defs><linearGradient id="dg" x1="1" y1="0" x2="0" y2="1"><stop offset="0" stop-color="#2c96d8"/><stop offset="1" stop-color="#45aee8"/></linearGradient><linearGradient id="pg" x1="0" y1="1" x2="1" y2="0"><stop offset="0" stop-color="#9150e2"/><stop offset="1" stop-color="#a466ea"/></linearGradient></defs><path d="M420.32,733.01 A84,84 0 1 1 344.36,778.47 L359.46,786.27 A67,67 0 1 0 420.05,750.01 Z" fill="url(#dg)"/><path d="M345.46,776.40 A84,84 0 0 1 417.68,733.01 L417.95,750.01 A67,67 0 0 0 360.34,784.62 Z" fill="url(#pg)"/></svg>
<div class="t" style="left:378px;top:799px;width:82px;text-align:center;font-size:20px;font-weight:700;color:#303030;letter-spacing:-0.3px">$10.6K</div>
<svg class="a" style="left:399px;top:826.5px" width="7" height="7" viewBox="0 0 7 7"><path d="M1 6 L4.6 2.4" stroke="#29845a" stroke-width="1.6" stroke-linecap="round"/><path d="M2.3 0.8 H6.2 V4.7 Z" fill="#29845a"/></svg><div class="t" style="left:408.8px;top:824.31px;font-size:11.7px;font-weight:700;color:#29845a">578%</div>
<div class="a" style="left:533px;top:797px;width:12px;height:12px;border-radius:2px;background:#3aa5e3"></div>
<div class="t" style="left:548px;top:796.5px;font-size:12.5px;color:#616161">Online Store</div>
<div class="t" style="left:653px;top:796.5px;font-size:12.5px;color:#616161">$8.8K</div>
<svg class="a" style="left:690.5px;top:800.0px" width="7" height="7" viewBox="0 0 7 7"><path d="M1 6 L4.6 2.4" stroke="#29845a" stroke-width="1.6" stroke-linecap="round"/><path d="M2.3 0.8 H6.2 V4.7 Z" fill="#29845a"/></svg><div class="t" style="left:700.3px;top:798.15px;font-size:11px;font-weight:700;color:#29845a">530%</div>
<div class="a" style="left:533px;top:825px;width:12px;height:12px;border-radius:2px;background:#9a52e3"></div>
<div class="t" style="left:548px;top:824.5px;font-size:12.5px;color:#616161">Shop</div>
<div class="t" style="left:653px;top:824.5px;font-size:12.5px;color:#616161">$1.9K</div>
<svg class="a" style="left:690.5px;top:828.0px" width="7" height="7" viewBox="0 0 7 7"><path d="M1 6 L4.6 2.4" stroke="#29845a" stroke-width="1.6" stroke-linecap="round"/><path d="M2.3 0.8 H6.2 V4.7 Z" fill="#29845a"/></svg><div class="t" style="left:700.3px;top:826.15px;font-size:11px;font-weight:700;color:#29845a">954%</div>
<div class="card" style="left:810px;top:673px;width:530px;height:252px"></div>
<div class="ttl" style="left:826px;top:687px">Average order value over time</div>
<div class="t" style="left:826px;top:721px;font-size:21.9px;font-weight:700;color:#303030">$94.97</div>
<svg class="a" style="left:902px;top:728.5px" width="7" height="7" viewBox="0 0 7 7"><path d="M1 6 L4.6 2.4" stroke="#29845a" stroke-width="1.6" stroke-linecap="round"/><path d="M2.3 0.8 H6.2 V4.7 Z" fill="#29845a"/></svg><div class="t" style="left:911.8px;top:726.31px;font-size:11.7px;font-weight:700;color:#29845a">0.1%</div>
<div class="t" style="left:828px;top:761px;font-size:11.5px;color:#616161">$200</div>
<div class="t" style="left:828px;top:834px;font-size:11.5px;color:#616161">$0</div>
<div class="t" style="left:838.0px;top:856px;width:80px;text-align:center;font-size:11.5px;color:#616161">Nov 2023</div>
<div class="t" style="left:948.4px;top:856px;width:80px;text-align:center;font-size:11.5px;color:#616161">Feb 2024</div>
<div class="t" style="left:1058.8px;top:856px;width:80px;text-align:center;font-size:11.5px;color:#616161">May 2024</div>
<div class="t" style="left:1169.2px;top:856px;width:80px;text-align:center;font-size:11.5px;color:#616161">Aug 2024</div>
<svg class="a" style="left:0;top:0" width="1919" height="948" viewBox="0 0 1919 948"><path d="M878.30,802.90 L879.30,802.92 L880.30,802.95 L881.30,803.00 L882.30,803.06 L883.30,803.14 L884.30,803.25 L885.30,803.39 L886.30,803.56 L887.30,803.77 L888.30,804.03 L889.30,804.33 L890.30,804.68 L891.30,805.07 L892.30,805.49 L893.30,805.94 L894.30,806.41 L895.30,806.89 L896.30,807.37 L897.30,807.84 L898.30,808.30 L899.30,808.73 L900.30,809.14 L901.30,809.52 L902.30,809.87 L903.30,810.19 L904.30,810.47 L905.30,810.73 L906.30,810.95 L907.30,811.14 L908.30,811.30 L909.30,811.44 L910.30,811.54 L911.30,811.62 L912.30,811.68 L913.30,811.70 L914.30,811.71 L915.30,811.69 L916.30,811.65 L917.30,811.59 L918.30,811.51 L919.30,811.42 L920.30,811.31 L921.30,811.19 L922.30,811.06 L923.30,810.92 L924.30,810.77 L925.30,810.61 L926.30,810.44 L927.30,810.27 L928.30,810.08 L929.30,809.88 L930.30,809.68 L931.30,809.45 L932.30,809.22 L933.30,808.98 L934.30,808.73 L935.30,808.47 L936.30,808.21 L937.30,807.95 L938.30,807.70 L939.30,807.47 L940.30,807.25 L941.30,807.05 L942.30,806.86 L943.30,806.70 L944.30,806.56 L945.30,806.44 L946.30,806.34 L947.30,806.26 L948.30,806.19 L949.30,806.13 L950.30,806.09 L951.30,806.05 L952.30,806.03 L953.30,806.01 L954.30,806.01 L955.30,806.00 L956.30,806.01 L957.30,806.01 L958.30,806.03 L959.30,806.04 L960.30,806.06 L961.30,806.08 L962.30,806.10 L963.30,806.12 L964.30,806.14 L965.30,806.17 L966.30,806.19 L967.30,806.20 L968.30,806.22 L969.30,806.23 L970.30,806.24 L971.30,806.25 L972.30,806.25 L973.30,806.25 L974.30,806.24 L975.30,806.22 L976.30,806.20 L977.30,806.18 L978.30,806.16 L979.30,806.13 L980.30,806.11 L981.30,806.09 L982.30,806.07 L983.30,806.06 L984.30,806.05 L985.30,806.05 L986.30,806.06 L987.30,806.08 L988.30,806.11 L989.30,806.16 L990.30,806.22 L991.30,806.30 L992.30,806.39 L993.30,806.50 L994.30,806.64 L995.30,806.79 L996.30,806.97 L997.30,807.17 L998.30,807.39 L999.30,807.63 L1000.30,807.89 L1001.30,808.17 L1002.30,808.47 L1003.30,808.78 L1004.30,809.11 L1005.30,809.45 L1006.30,809.80 L1007.30,810.15 L1008.30,810.50 L1009.30,810.84 L1010.30,811.17 L1011.30,811.48 L1012.30,811.77 L1013.30,812.04 L1014.30,812.28 L1015.30,812.50 L1016.30,812.68 L1017.30,812.84 L1018.30,812.97 L1019.30,813.08 L1020.30,813.16 L1021.30,813.22 L1022.30,813.25 L1023.30,813.26 L1024.30,813.25 L1025.30,813.22 L1026.30,813.16 L1027.30,813.06 L1028.30,812.93 L1029.30,812.76 L1030.30,812.53 L1031.30,812.25 L1032.30,811.91 L1033.30,811.50 L1034.30,811.02 L1035.30,810.46 L1036.30,809.82 L1037.30,809.09 L1038.30,808.28 L1039.30,807.37 L1040.30,806.37 L1041.30,805.29 L1042.30,804.13 L1043.30,802.92 L1044.30,801.67 L1045.30,800.42 L1046.30,799.20 L1047.30,798.04 L1048.30,796.96 L1049.30,795.99 L1050.30,795.15 L1051.30,794.43 L1052.30,793.83 L1053.30,793.34 L1054.30,792.95 L1055.30,792.64 L1056.30,792.39 L1057.30,792.20 L1058.30,792.04 L1059.30,791.92 L1060.30,791.83 L1061.30,791.75 L1062.30,791.70 L1063.30,791.68 L1064.30,791.67 L1065.30,791.68 L1066.30,791.72 L1067.30,791.77 L1068.30,791.84 L1069.30,791.93 L1070.30,792.03 L1071.30,792.14 L1072.30,792.27 L1073.30,792.41 L1074.30,792.55 L1075.30,792.71 L1076.30,792.87 L1077.30,793.03 L1078.30,793.20 L1079.30,793.37 L1080.30,793.54 L1081.30,793.71 L1082.30,793.86 L1083.30,794.02 L1084.30,794.16 L1085.30,794.28 L1086.30,794.39 L1087.30,794.48 L1088.30,794.56 L1089.30,794.61 L1090.30,794.65 L1091.30,794.67 L1092.30,794.68 L1093.30,794.69 L1094.30,794.68 L1095.30,794.68 L1096.30,794.68 L1097.30,794.68 L1098.30,794.70 L1099.30,794.73 L1100.30,794.78 L1101.30,794.85 L1102.30,794.94 L1103.30,795.07 L1104.30,795.24 L1105.30,795.45 L1106.30,795.71 L1107.30,796.04 L1108.30,796.43 L1109.30,796.90 L1110.30,797.45 L1111.30,798.08 L1112.30,798.78 L1113.30,799.56 L1114.30,800.41 L1115.30,801.32 L1116.30,802.26 L1117.30,803.24 L1118.30,804.22 L1119.30,805.19 L1120.30,806.13 L1121.30,807.01 L1122.30,807.81 L1123.30,808.52 L1124.30,809.13 L1125.30,809.65 L1126.30,810.06 L1127.30,810.38 L1128.30,810.63 L1129.30,810.81 L1130.30,810.93 L1131.30,811.01 L1132.30,811.06 L1133.30,811.09 L1134.30,811.10 L1135.30,811.11 L1136.30,811.12 L1137.30,811.13 L1138.30,811.14 L1139.30,811.17 L1140.30,811.22 L1141.30,811.29 L1142.30,811.38 L1143.30,811.50 L1144.30,811.65 L1145.30,811.83 L1146.30,812.05 L1147.30,812.29 L1148.30,812.56 L1149.30,812.85 L1150.30,813.16 L1151.30,813.48 L1152.30,813.80 L1153.30,814.12 L1154.30,814.44 L1155.30,814.74 L1156.30,815.03 L1157.30,815.29 L1158.30,815.54 L1159.30,815.75 L1160.30,815.94 L1161.30,816.11 L1162.30,816.25 L1163.30,816.36 L1164.30,816.46 L1165.30,816.54 L1166.30,816.59 L1167.30,816.64 L1168.30,816.66 L1169.30,816.68 L1170.30,816.68 L1171.30,816.66 L1172.30,816.64 L1173.30,816.60 L1174.30,816.56 L1175.30,816.49 L1176.30,816.42 L1177.30,816.32 L1178.30,816.20 L1179.30,816.05 L1180.30,815.86 L1181.30,815.61 L1182.30,815.29 L1183.30,814.88 L1184.30,814.38 L1185.30,813.77 L1186.30,813.07 L1187.30,812.29 L1188.30,811.44 L1189.30,810.55 L1190.30,809.64 L1191.30,808.75 L1192.30,807.88 L1193.30,807.05 L1194.30,806.28 L1195.30,805.57 L1196.30,804.92 L1197.30,804.35 L1198.30,803.84 L1199.30,803.40 L1200.30,803.03 L1201.30,802.72 L1202.30,802.47 L1203.30,802.27 L1204.30,802.11 L1205.30,801.99 L1206.30,801.91 L1207.30,801.84 L1208.30,801.80 L1209.30,801.78 L1210.30,801.77 L1211.30,801.77 L1212.30,801.79 L1213.30,801.82 L1214.30,801.86 L1215.30,801.91 L1216.30,801.97 L1217.30,802.04 L1218.30,802.12 L1219.30,802.21 L1220.30,802.30 L1221.30,802.41 L1222.30,802.52 L1223.30,802.64 L1224.30,802.76 L1225.30,802.89 L1226.30,803.03 L1227.30,803.16 L1228.30,803.30 L1229.30,803.45 L1230.30,803.59 L1231.30,803.73 L1232.30,803.87 L1233.30,804.01 L1234.30,804.14 L1235.30,804.26 L1236.30,804.38 L1237.30,804.48 L1238.30,804.57 L1239.30,804.65 L1240.30,804.72 L1241.30,804.78 L1242.30,804.82 L1243.30,804.85 L1244.30,804.87 L1245.30,804.88 L1246.30,804.89 L1247.30,804.89 L1248.30,804.87 L1249.30,804.86 L1250.30,804.84 L1251.30,804.81 L1252.30,804.78 L1253.30,804.75 L1254.30,804.71 L1255.30,804.67 L1256.30,804.64 L1257.30,804.60 L1258.30,804.56 L1259.30,804.52 L1260.30,804.48 L1261.30,804.44 L1262.30,804.40 L1263.30,804.37 L1264.30,804.34 L1265.30,804.31 L1266.30,804.28 L1267.30,804.26 L1268.30,804.23 L1269.30,804.22 L1270.30,804.20 L1271.30,804.19 L1272.30,804.19 L1273.30,804.18 L1274.30,804.18 L1275.30,804.18 L1276.30,804.17 L1277.30,804.17 L1278.30,804.16 L1279.30,804.15 L1280.30,804.13 L1281.30,804.11 L1282.30,804.09 L1283.30,804.05 L1284.30,804.01 L1285.30,803.95 L1286.30,803.89 L1287.30,803.81 L1288.30,803.72 L1289.30,803.61 L1290.30,803.49 L1291.30,803.34 L1292.30,803.17 L1293.30,802.97 L1294.30,802.73 L1295.30,802.46 L1296.30,802.15 L1297.30,801.81 L1298.30,801.43 L1299.30,801.03 L1300.30,800.60 L1301.30,800.17 L1302.30,799.73 L1303.30,799.29 L1304.30,798.88 L1305.30,798.48 L1306.30,798.12 L1307.30,797.79 L1308.30,797.50 L1309.30,797.24 L1310.30,797.02 L1311.30,796.84 L1312.30,796.67 L1313.30,796.54 L1314.30,796.42 L1315.30,796.32 L1316.30,796.23 L1317.30,796.14 L1318.30,796.06 L1319.20,796.00 L1319.2,840 L878.3,840 Z" fill="url(#mg)"/><rect x="878" y="766" width="442" height="2" fill="#e9e9e9" fill-opacity="0.45"/><rect x="878" y="839" width="442" height="2" fill="#e9e9e9" fill-opacity="0.45"/><path d="M878.30,805.80 L879.30,805.76 L880.30,805.72 L881.30,805.65 L882.30,805.57 L883.30,805.47 L884.30,805.35 L885.30,805.19 L886.30,805.00 L887.30,804.77 L888.30,804.50 L889.30,804.19 L890.30,803.83 L891.30,803.43 L892.30,802.98 L893.30,802.50 L894.30,801.97 L895.30,801.42 L896.30,800.85 L897.30,800.28 L898.30,799.71 L899.30,799.16 L900.30,798.65 L901.30,798.18 L902.30,797.77 L903.30,797.40 L904.30,797.07 L905.30,796.80 L906.30,796.56 L907.30,796.35 L908.30,796.18 L909.30,796.03 L910.30,795.90 L911.30,795.80 L912.30,795.74 L913.30,795.71 L914.30,795.72 L915.30,795.79 L916.30,795.91 L917.30,796.10 L918.30,796.37 L919.30,796.72 L920.30,797.15 L921.30,797.69 L922.30,798.33 L923.30,799.09 L924.30,799.98 L925.30,801.05 L926.30,802.31 L927.30,803.79 L928.30,805.53 L929.30,807.52 L930.30,809.76 L931.30,812.21 L932.30,814.81 L933.30,817.50 L934.30,820.18 L935.30,822.79 L936.30,825.26 L937.30,827.55 L938.30,829.62 L939.30,831.46 L940.30,833.07 L941.30,834.47 L942.30,835.66 L943.30,836.67 L944.30,837.50 L945.30,838.18 L946.30,838.70 L947.30,839.11 L948.30,839.40 L949.30,839.61 L950.30,839.75 L951.30,839.85 L952.30,839.91 L953.30,839.94 L954.30,839.96 L955.30,839.95 L956.30,839.94 L957.30,839.91 L958.30,839.88 L959.30,839.84 L960.00,839.80 L1320,839.8" stroke="#9db5c3" stroke-width="1.7" fill="none" stroke-dasharray="1.7 2.4"/><path d="M878.30,802.90 L879.30,802.92 L880.30,802.95 L881.30,803.00 L882.30,803.06 L883.30,803.14 L884.30,803.25 L885.30,803.39 L886.30,803.56 L887.30,803.77 L888.30,804.03 L889.30,804.33 L890.30,804.68 L891.30,805.07 L892.30,805.49 L893.30,805.94 L894.30,806.41 L895.30,806.89 L896.30,807.37 L897.30,807.84 L898.30,808.30 L899.30,808.73 L900.30,809.14 L901.30,809.52 L902.30,809.87 L903.30,810.19 L904.30,810.47 L905.30,810.73 L906.30,810.95 L907.30,811.14 L908.30,811.30 L909.30,811.44 L910.30,811.54 L911.30,811.62 L912.30,811.68 L913.30,811.70 L914.30,811.71 L915.30,811.69 L916.30,811.65 L917.30,811.59 L918.30,811.51 L919.30,811.42 L920.30,811.31 L921.30,811.19 L922.30,811.06 L923.30,810.92 L924.30,810.77 L925.30,810.61 L926.30,810.44 L927.30,810.27 L928.30,810.08 L929.30,809.88 L930.30,809.68 L931.30,809.45 L932.30,809.22 L933.30,808.98 L934.30,808.73 L935.30,808.47 L936.30,808.21 L937.30,807.95 L938.30,807.70 L939.30,807.47 L940.30,807.25 L941.30,807.05 L942.30,806.86 L943.30,806.70 L944.30,806.56 L945.30,806.44 L946.30,806.34 L947.30,806.26 L948.30,806.19 L949.30,806.13 L950.30,806.09 L951.30,806.05 L952.30,806.03 L953.30,806.01 L954.30,806.01 L955.30,806.00 L956.30,806.01 L957.30,806.01 L958.30,806.03 L959.30,806.04 L960.30,806.06 L961.30,806.08 L962.30,806.10 L963.30,806.12 L964.30,806.14 L965.30,806.17 L966.30,806.19 L967.30,806.20 L968.30,806.22 L969.30,806.23 L970.30,806.24 L971.30,806.25 L972.30,806.25 L973.30,806.25 L974.30,806.24 L975.30,806.22 L976.30,806.20 L977.30,806.18 L978.30,806.16 L979.30,806.13 L980.30,806.11 L981.30,806.09 L982.30,806.07 L983.30,806.06 L984.30,806.05 L985.30,806.05 L986.30,806.06 L987.30,806.08 L988.30,806.11 L989.30,806.16 L990.30,806.22 L991.30,806.30 L992.30,806.39 L993.30,806.50 L994.30,806.64 L995.30,806.79 L996.30,806.97 L997.30,807.17 L998.30,807.39 L999.30,807.63 L1000.30,807.89 L1001.30,808.17 L1002.30,808.47 L1003.30,808.78 L1004.30,809.11 L1005.30,809.45 L1006.30,809.80 L1007.30,810.15 L1008.30,810.50 L1009.30,810.84 L1010.30,811.17 L1011.30,811.48 L1012.30,811.77 L1013.30,812.04 L1014.30,812.28 L1015.30,812.50 L1016.30,812.68 L1017.30,812.84 L1018.30,812.97 L1019.30,813.08 L1020.30,813.16 L1021.30,813.22 L1022.30,813.25 L1023.30,813.26 L1024.30,813.25 L1025.30,813.22 L1026.30,813.16 L1027.30,813.06 L1028.30,812.93 L1029.30,812.76 L1030.30,812.53 L1031.30,812.25 L1032.30,811.91 L1033.30,811.50 L1034.30,811.02 L1035.30,810.46 L1036.30,809.82 L1037.30,809.09 L1038.30,808.28 L1039.30,807.37 L1040.30,806.37 L1041.30,805.29 L1042.30,804.13 L1043.30,802.92 L1044.30,801.67 L1045.30,800.42 L1046.30,799.20 L1047.30,798.04 L1048.30,796.96 L1049.30,795.99 L1050.30,795.15 L1051.30,794.43 L1052.30,793.83 L1053.30,793.34 L1054.30,792.95 L1055.30,792.64 L1056.30,792.39 L1057.30,792.20 L1058.30,792.04 L1059.30,791.92 L1060.30,791.83 L1061.30,791.75 L1062.30,791.70 L1063.30,791.68 L1064.30,791.67 L1065.30,791.68 L1066.30,791.72 L1067.30,791.77 L1068.30,791.84 L1069.30,791.93 L1070.30,792.03 L1071.30,792.14 L1072.30,792.27 L1073.30,792.41 L1074.30,792.55 L1075.30,792.71 L1076.30,792.87 L1077.30,793.03 L1078.30,793.20 L1079.30,793.37 L1080.30,793.54 L1081.30,793.71 L1082.30,793.86 L1083.30,794.02 L1084.30,794.16 L1085.30,794.28 L1086.30,794.39 L1087.30,794.48 L1088.30,794.56 L1089.30,794.61 L1090.30,794.65 L1091.30,794.67 L1092.30,794.68 L1093.30,794.69 L1094.30,794.68 L1095.30,794.68 L1096.30,794.68 L1097.30,794.68 L1098.30,794.70 L1099.30,794.73 L1100.30,794.78 L1101.30,794.85 L1102.30,794.94 L1103.30,795.07 L1104.30,795.24 L1105.30,795.45 L1106.30,795.71 L1107.30,796.04 L1108.30,796.43 L1109.30,796.90 L1110.30,797.45 L1111.30,798.08 L1112.30,798.78 L1113.30,799.56 L1114.30,800.41 L1115.30,801.32 L1116.30,802.26 L1117.30,803.24 L1118.30,804.22 L1119.30,805.19 L1120.30,806.13 L1121.30,807.01 L1122.30,807.81 L1123.30,808.52 L1124.30,809.13 L1125.30,809.65 L1126.30,810.06 L1127.30,810.38 L1128.30,810.63 L1129.30,810.81 L1130.30,810.93 L1131.30,811.01 L1132.30,811.06 L1133.30,811.09 L1134.30,811.10 L1135.30,811.11 L1136.30,811.12 L1137.30,811.13 L1138.30,811.14 L1139.30,811.17 L1140.30,811.22 L1141.30,811.29 L1142.30,811.38 L1143.30,811.50 L1144.30,811.65 L1145.30,811.83 L1146.30,812.05 L1147.30,812.29 L1148.30,812.56 L1149.30,812.85 L1150.30,813.16 L1151.30,813.48 L1152.30,813.80 L1153.30,814.12 L1154.30,814.44 L1155.30,814.74 L1156.30,815.03 L1157.30,815.29 L1158.30,815.54 L1159.30,815.75 L1160.30,815.94 L1161.30,816.11 L1162.30,816.25 L1163.30,816.36 L1164.30,816.46 L1165.30,816.54 L1166.30,816.59 L1167.30,816.64 L1168.30,816.66 L1169.30,816.68 L1170.30,816.68 L1171.30,816.66 L1172.30,816.64 L1173.30,816.60 L1174.30,816.56 L1175.30,816.49 L1176.30,816.42 L1177.30,816.32 L1178.30,816.20 L1179.30,816.05 L1180.30,815.86 L1181.30,815.61 L1182.30,815.29 L1183.30,814.88 L1184.30,814.38 L1185.30,813.77 L1186.30,813.07 L1187.30,812.29 L1188.30,811.44 L1189.30,810.55 L1190.30,809.64 L1191.30,808.75 L1192.30,807.88 L1193.30,807.05 L1194.30,806.28 L1195.30,805.57 L1196.30,804.92 L1197.30,804.35 L1198.30,803.84 L1199.30,803.40 L1200.30,803.03 L1201.30,802.72 L1202.30,802.47 L1203.30,802.27 L1204.30,802.11 L1205.30,801.99 L1206.30,801.91 L1207.30,801.84 L1208.30,801.80 L1209.30,801.78 L1210.30,801.77 L1211.30,801.77 L1212.30,801.79 L1213.30,801.82 L1214.30,801.86 L1215.30,801.91 L1216.30,801.97 L1217.30,802.04 L1218.30,802.12 L1219.30,802.21 L1220.30,802.30 L1221.30,802.41 L1222.30,802.52 L1223.30,802.64 L1224.30,802.76 L1225.30,802.89 L1226.30,803.03 L1227.30,803.16 L1228.30,803.30 L1229.30,803.45 L1230.30,803.59 L1231.30,803.73 L1232.30,803.87 L1233.30,804.01 L1234.30,804.14 L1235.30,804.26 L1236.30,804.38 L1237.30,804.48 L1238.30,804.57 L1239.30,804.65 L1240.30,804.72 L1241.30,804.78 L1242.30,804.82 L1243.30,804.85 L1244.30,804.87 L1245.30,804.88 L1246.30,804.89 L1247.30,804.89 L1248.30,804.87 L1249.30,804.86 L1250.30,804.84 L1251.30,804.81 L1252.30,804.78 L1253.30,804.75 L1254.30,804.71 L1255.30,804.67 L1256.30,804.64 L1257.30,804.60 L1258.30,804.56 L1259.30,804.52 L1260.30,804.48 L1261.30,804.44 L1262.30,804.40 L1263.30,804.37 L1264.30,804.34 L1265.30,804.31 L1266.30,804.28 L1267.30,804.26 L1268.30,804.23 L1269.30,804.22 L1270.30,804.20 L1271.30,804.19 L1272.30,804.19 L1273.30,804.18 L1274.30,804.18 L1275.30,804.18 L1276.30,804.17 L1277.30,804.17 L1278.30,804.16 L1279.30,804.15 L1280.30,804.13 L1281.30,804.11 L1282.30,804.09 L1283.30,804.05 L1284.30,804.01 L1285.30,803.95 L1286.30,803.89 L1287.30,803.81 L1288.30,803.72 L1289.30,803.61 L1290.30,803.49 L1291.30,803.34 L1292.30,803.17 L1293.30,802.97 L1294.30,802.73 L1295.30,802.46 L1296.30,802.15 L1297.30,801.81 L1298.30,801.43 L1299.30,801.03 L1300.30,800.60 L1301.30,800.17 L1302.30,799.73 L1303.30,799.29 L1304.30,798.88 L1305.30,798.48 L1306.30,798.12 L1307.30,797.79 L1308.30,797.50 L1309.30,797.24 L1310.30,797.02 L1311.30,796.84 L1312.30,796.67 L1313.30,796.54 L1314.30,796.42 L1315.30,796.32 L1316.30,796.23 L1317.30,796.14 L1318.30,796.06 L1319.20,796.00" stroke="#4f9bc4" stroke-width="2" fill="none" stroke-linecap="round"/></svg>
<div class="a" style="left:926px;top:898px;width:13px;height:2px;background:#4f9bc4;border-radius:1px"></div>
<div class="t" style="left:946px;top:893px;font-size:11.5px;color:#616161">Nov 4, 2023–Nov 2, 2024</div>
<svg class="a" style="left:1097px;top:897px" width="16" height="4"><path d="M1 2 H15" stroke="#8fbfd6" stroke-width="1.6" stroke-dasharray="1.6 3"/></svg>
<div class="t" style="left:1118px;top:893px;font-size:11.5px;color:#616161">Oct 4–Nov 3, 2024</div>
<div class="card" style="left:1355px;top:673px;width:530px;height:252px"></div>
<div class="ttl" style="left:1371px;top:687px">Total sales by product</div>
<div class="t" style="left:1371px;top:729px;font-size:11px;color:#616161;letter-spacing:0.03px">GLAM&#39;S 24K BEAUTY HALF CAST WHITENING FACIAL CREAM FOR ACNE, BLACK SPOT &amp;PI...</div>
<div class="a" style="left:1371px;top:744px;width:402px;height:31px;border-radius:0 3px 3px 0;background:linear-gradient(to right,#2f8fd4,#4fb6ea)"></div>
<div class="t" style="left:1783px;top:755px;font-size:11.5px;color:#616161">$714.7</div>
<div class="a" style="left:1371px;top:778px;width:1px;height:31px;background:#a8d2ee"></div>
<div class="t" style="left:1382px;top:787.5px;font-size:11.5px;color:#616161">$0</div>
<div class="t" style="left:1371px;top:830px;font-size:11.8px;color:#616161">Molato Promax extra lightening soap with exfoliating 700g · Jbeautys · Body soap</div>
<div class="a" style="left:1371px;top:845px;width:260px;height:31px;border-radius:0 3px 3px 0;background:linear-gradient(to right,#2f8fd4,#43a9e3)"></div>
<div class="a" style="left:1371px;top:879px;width:79px;height:31px;border-radius:0 3px 3px 0;background:#91c8ea"></div>
<div class="t" style="left:1460px;top:888.5px;font-size:11.5px;color:#616161">$140</div>
<div class="a" style="left:264px;top:942px;width:530px;height:20px;border-radius:12px;background:#fff;box-shadow:inset 0 1px 0 #e1e1e1, inset 1px 0 0 #e6e6e6, inset -1px 0 0 #e6e6e6"></div>
<div class="a" style="left:810px;top:942px;width:530px;height:20px;border-radius:12px;background:#fff;box-shadow:inset 0 1px 0 #e1e1e1, inset 1px 0 0 #e6e6e6, inset -1px 0 0 #e6e6e6"></div>
<div class="a" style="left:1355px;top:942px;width:530px;height:20px;border-radius:12px;background:#fff;box-shadow:inset 0 1px 0 #e1e1e1, inset 1px 0 0 #e6e6e6, inset -1px 0 0 #e6e6e6"></div>
<div class="a" style="left:0;top:946px;width:1919px;height:1px;background:#b6bac5"></div>
<div class="a" style="left:0;top:947px;width:1919px;height:1px;background:#e6e8f2"></div>
<div class="a" style="left:1586px;top:845px;width:208px;height:88px;border-radius:8px;background:linear-gradient(165deg,#e2eef9 0%,#edf4fb 45%,#f5f8fb 100%);box-shadow:0 4px 14px rgba(0,0,0,.18), 0 0 0 1px rgba(0,0,0,.06)"></div>
<div class="a" style="left:1711px;top:851px;width:38px;height:37px;border-radius:4px;background:#f5f8fc;box-shadow:0 0 0 1px rgba(0,0,0,.02)"></div>
<svg class="a" style="left:1601px;top:861px" width="17" height="17" viewBox="0 0 17 17"><path d="M8.5 0.8 C13.5 0.8 16.2 3.5 16.2 8.5 C16.2 13.5 13.5 16.2 8.5 16.2 C3.5 16.2 0.8 13.5 0.8 8.5 C0.8 3.5 3.5 0.8 8.5 0.8 Z" fill="#68a82c"/><path d="M5.2 8.8 L7.5 10.9 L11.8 6.4" stroke="#fff" stroke-width="1.8" fill="none" stroke-linecap="round" stroke-linejoin="round"/></svg>
<svg class="a" style="left:1640px;top:860px" width="20" height="18" viewBox="0 0 20 18"><path d="M2 5 L11 8 L8 16 Z" fill="#555"/><path d="M2 5 L11 8 L6.5 9.5 Z" fill="#888"/><circle cx="14" cy="5" r="4" fill="#d83a4a"/><path d="M12.4 3.4 L15.6 6.6 M15.6 3.4 L12.4 6.6" stroke="#fff" stroke-width="1.1"/></svg>
<svg class="a" style="left:1680px;top:860px" width="18" height="18" viewBox="0 0 18 18"><g stroke="#666" stroke-width="1.3" fill="none"><rect x="6" y="1.5" width="3" height="15" rx="1.5"/><rect x="9" y="1.5" width="3" height="15" rx="1.5"/><rect x="1.5" y="6" width="15" height="3" rx="1.5"/><rect x="1.5" y="9" width="15" height="3" rx="1.5"/></g></svg>
<svg class="a" style="left:1720px;top:860px" width="20" height="18" viewBox="0 0 20 18"><path d="M2.5 16 C5 10 10 4 18 1.5 C16 7 11 13 3.5 15.5 Z" fill="#9a66d9"/><path d="M2.5 16 L12 6.5" stroke="#c9a8f0" stroke-width="0.8"/></svg>
<svg class="a" style="left:1762px;top:859px" width="15" height="19" viewBox="0 0 15 19"><path d="M2 3 C2 1.5 4 1 7.5 1 C11 1 13 1.5 13 3 V5 H2 Z" fill="#222"/><path d="M2.5 5.5 H12.5 L11.8 17 C11.8 17.7 11.2 18 10.5 18 H4.5 C3.8 18 3.2 17.7 3.2 17 Z" fill="#2c2c2c"/><path d="M5.5 8 V15 M9.5 8 V15 M5.5 11.5 H9.5" stroke="#ddd" stroke-width="1.2"/></svg>
<svg class="a" style="left:1601px;top:899px" width="20" height="20" viewBox="0 0 20 20"><path d="M8 1 L14 3 V8 C14 12 11.5 15 8 16.5 C4.5 15 2 12 2 8 V3 Z" fill="#1f78d1"/><path d="M8 1 L14 3 V8 C14 12 11.5 15 8 16.5 Z" fill="#4aa0ee"/><path d="M13.5 10 L18.5 18.5 H8.5 Z" fill="#f5c518" stroke="#e0a800" stroke-width="0.5"/><path d="M13.5 13 V15.6" stroke="#222" stroke-width="1.2"/><circle cx="13.5" cy="17.2" r="0.6" fill="#222"/></svg>
<svg class="a" style="left:1643px;top:899px" width="14" height="20" viewBox="0 0 14 20"><rect x="1" y="1" width="12" height="18" rx="6" fill="#1a73d6"/><path d="M3.6 7 L10 12.8 L7 15.6 V4.4 L10 7.2 L3.6 13" stroke="#fff" stroke-width="1.3" fill="none" stroke-linejoin="round"/></svg></body></html>
